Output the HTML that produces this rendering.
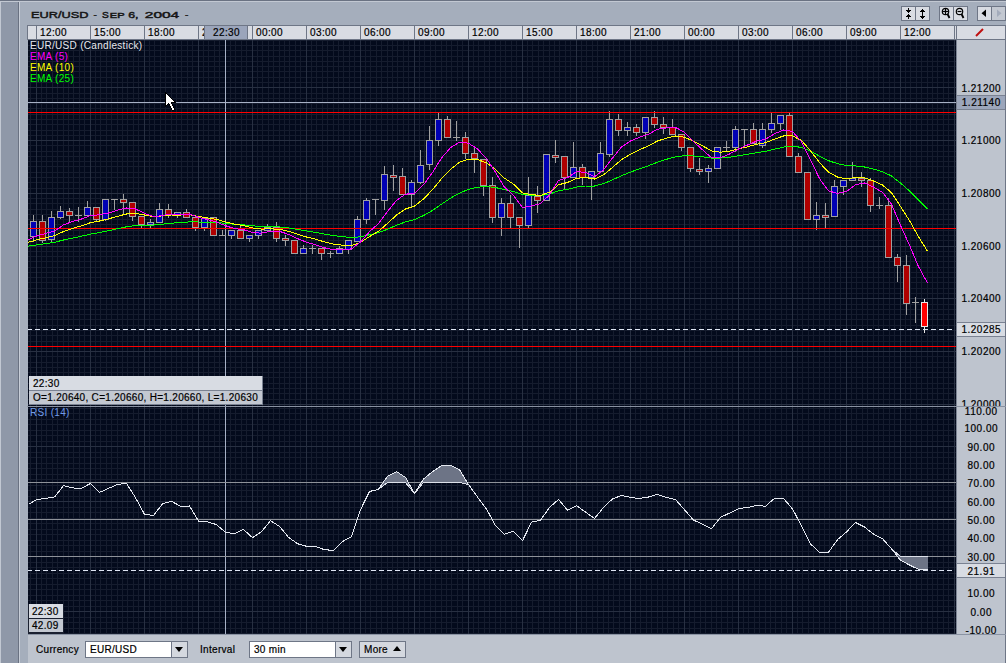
<!DOCTYPE html>
<html><head><meta charset="utf-8">
<style>
html,body{margin:0;padding:0;}
body{width:1006px;height:663px;overflow:hidden;position:relative;background:#a5aebc;font-family:"Liberation Sans",sans-serif;font-size:10px;color:#000;}
.a{position:absolute;}
body{-webkit-text-stroke:0.2px currentColor}
.t{position:absolute;white-space:nowrap;line-height:13px;letter-spacing:0.3px;font-size:10px}
.hc{position:absolute;top:26px;height:13px;background:#d9dce3;}
.ax{position:absolute;left:957px;width:48px;text-align:center;line-height:13px;white-space:nowrap;letter-spacing:0.5px;text-indent:0.5px;font-size:10px}
</style></head><body>
<!-- left strip -->
<div class="a" style="left:0;top:0;width:1px;height:663px;background:#c2c8d2"></div>
<div class="a" style="left:1px;top:0;width:17px;height:663px;background:#8f98a8"></div>
<div class="a" style="left:18px;top:0;width:1px;height:663px;background:#6a7282"></div>
<div class="a" style="left:19px;top:0;width:1px;height:663px;background:#c8ced8"></div>
<div class="a" style="left:0;top:0;width:1006px;height:1px;background:#6a7282"></div>
<div class="a" style="left:0;top:1px;width:1006px;height:1px;background:#c2c8d2"></div>

<!-- title -->
<svg class="a" style="left:0;top:0" width="300" height="24"><g font-family="Liberation Sans" font-weight="normal" fill="#161616" stroke="#161616" stroke-width="0.45" style="-webkit-text-stroke:0"><text x="31" y="18.3" font-size="9.2" textLength="57.5" lengthAdjust="spacingAndGlyphs">EUR/USD</text><text x="93.5" y="18.3" font-size="9.2" textLength="3.3" lengthAdjust="spacingAndGlyphs">-</text><text x="102" y="18.3" font-size="9.2" textLength="6.8" lengthAdjust="spacingAndGlyphs">S</text><text x="109.8" y="18.3" font-size="7.2" textLength="14.8" lengthAdjust="spacingAndGlyphs">EP</text><text x="128.2" y="18.3" font-size="9.2" textLength="10.3" lengthAdjust="spacingAndGlyphs">6,</text><text x="144.8" y="18.3" font-size="9.2" textLength="34.4" lengthAdjust="spacingAndGlyphs">2004</text><text x="185" y="18.3" font-size="9.2" textLength="3.3" lengthAdjust="spacingAndGlyphs">-</text></g></svg>

<!-- title buttons -->
<div class="a" style="left:901px;top:6px;width:29px;height:15px;background:#6e7686"></div>
<div class="a" style="left:902px;top:7px;width:13px;height:13px;background:#d9dce3"></div>
<div class="a" style="left:916px;top:7px;width:13px;height:13px;background:#d9dce3"></div>
<div class="a" style="left:939px;top:6px;width:29px;height:15px;background:#6e7686"></div>
<div class="a" style="left:940px;top:7px;width:13px;height:13px;background:#d9dce3"></div>
<div class="a" style="left:954px;top:7px;width:13px;height:13px;background:#d9dce3"></div>
<div class="a" style="left:977px;top:6px;width:29px;height:15px;background:#6e7686"></div>
<div class="a" style="left:978px;top:7px;width:13px;height:13px;background:#d9dce3"></div>
<div class="a" style="left:992px;top:7px;width:13px;height:13px;background:#c3c8d1"></div>

<!-- time header -->
<div class="a" style="left:27px;top:25px;width:979px;height:15px;background:#6e7686"></div>
<div class="hc" style="left:28px;width:8px"></div>
<div class="hc" style="left:37px;width:53px"></div>
<div class="t" style="left:40px;top:26px;letter-spacing:0.4px">12:00</div>
<div class="hc" style="left:91px;width:53px"></div>
<div class="t" style="left:94px;top:26px;letter-spacing:0.4px">15:00</div>
<div class="hc" style="left:145px;width:53px"></div>
<div class="t" style="left:148px;top:26px;letter-spacing:0.4px">18:00</div>
<div class="hc" style="left:199px;width:53px"></div>
<div class="t" style="left:202px;top:26px;letter-spacing:0.4px">21:00</div>
<div class="hc" style="left:253px;width:53px"></div>
<div class="t" style="left:256px;top:26px;letter-spacing:0.4px">00:00</div>
<div class="hc" style="left:307px;width:53px"></div>
<div class="t" style="left:310px;top:26px;letter-spacing:0.4px">03:00</div>
<div class="hc" style="left:361px;width:53px"></div>
<div class="t" style="left:364px;top:26px;letter-spacing:0.4px">06:00</div>
<div class="hc" style="left:415px;width:53px"></div>
<div class="t" style="left:418px;top:26px;letter-spacing:0.4px">09:00</div>
<div class="hc" style="left:469px;width:53px"></div>
<div class="t" style="left:472px;top:26px;letter-spacing:0.4px">12:00</div>
<div class="hc" style="left:523px;width:53px"></div>
<div class="t" style="left:526px;top:26px;letter-spacing:0.4px">15:00</div>
<div class="hc" style="left:577px;width:53px"></div>
<div class="t" style="left:580px;top:26px;letter-spacing:0.4px">18:00</div>
<div class="hc" style="left:631px;width:53px"></div>
<div class="t" style="left:634px;top:26px;letter-spacing:0.4px">21:00</div>
<div class="hc" style="left:685px;width:53px"></div>
<div class="t" style="left:688px;top:26px;letter-spacing:0.4px">00:00</div>
<div class="hc" style="left:739px;width:53px"></div>
<div class="t" style="left:742px;top:26px;letter-spacing:0.4px">03:00</div>
<div class="hc" style="left:793px;width:53px"></div>
<div class="t" style="left:796px;top:26px;letter-spacing:0.4px">06:00</div>
<div class="hc" style="left:847px;width:53px"></div>
<div class="t" style="left:850px;top:26px;letter-spacing:0.4px">09:00</div>
<div class="hc" style="left:901px;width:53px"></div>
<div class="t" style="left:904px;top:26px;letter-spacing:0.4px">12:00</div>
<div class="a" style="left:955px;top:26px;width:1px;height:13px;background:#d9dce3"></div>
<div class="a" style="left:204px;top:26px;width:44px;height:13px;background:#6e7686"></div>
<div class="a" style="left:205px;top:26px;width:42px;height:13px;background:#9ba5bb"></div>
<div class="t" style="left:213px;top:26px;letter-spacing:0.4px">22:30</div>
<div class="hc" style="left:957px;width:48px"></div>

<!-- price axis -->
<div class="a" style="left:956px;top:40px;width:1px;height:594px;background:#7c8494"></div>
<div class="a" style="left:957px;top:40px;width:48px;height:594px;background:#bec4ce"></div>
<div class="a" style="left:1005px;top:25px;width:1px;height:638px;background:#6e7686"></div>

<!-- bottom toolbar -->
<div class="a" style="left:27px;top:634px;width:979px;height:1px;background:#8a93a3"></div>
<div class="a" style="left:28px;top:635px;width:977px;height:28px;background:#bec4ce"></div>
<div class="a" style="left:27px;top:40px;width:1px;height:623px;background:#a5aebc"></div>

<svg class="a" style="left:0;top:0" width="1006" height="663" shape-rendering="crispEdges">
<defs><clipPath id="cliptop"><rect x="28" y="40" width="928" height="366"/></clipPath></defs>
<rect x="28" y="40" width="928" height="366" fill="#030a1c"/>
<rect x="28" y="407" width="928" height="227" fill="#030a1c"/>
<rect x="28" y="405" width="928" height="1" fill="#030a1c"/>
<rect x="30" y="40" width="1" height="366" fill="#151c2e"/>
<rect x="36" y="40" width="1" height="366" fill="#283042"/>
<rect x="41" y="40" width="1" height="366" fill="#151c2e"/>
<rect x="46" y="40" width="1" height="366" fill="#151c2e"/>
<rect x="52" y="40" width="1" height="366" fill="#151c2e"/>
<rect x="57" y="40" width="1" height="366" fill="#151c2e"/>
<rect x="63" y="40" width="1" height="366" fill="#151c2e"/>
<rect x="68" y="40" width="1" height="366" fill="#151c2e"/>
<rect x="73" y="40" width="1" height="366" fill="#151c2e"/>
<rect x="79" y="40" width="1" height="366" fill="#151c2e"/>
<rect x="84" y="40" width="1" height="366" fill="#151c2e"/>
<rect x="90" y="40" width="1" height="366" fill="#283042"/>
<rect x="95" y="40" width="1" height="366" fill="#151c2e"/>
<rect x="100" y="40" width="1" height="366" fill="#151c2e"/>
<rect x="106" y="40" width="1" height="366" fill="#151c2e"/>
<rect x="111" y="40" width="1" height="366" fill="#151c2e"/>
<rect x="117" y="40" width="1" height="366" fill="#151c2e"/>
<rect x="122" y="40" width="1" height="366" fill="#151c2e"/>
<rect x="127" y="40" width="1" height="366" fill="#151c2e"/>
<rect x="133" y="40" width="1" height="366" fill="#151c2e"/>
<rect x="138" y="40" width="1" height="366" fill="#151c2e"/>
<rect x="144" y="40" width="1" height="366" fill="#283042"/>
<rect x="149" y="40" width="1" height="366" fill="#151c2e"/>
<rect x="154" y="40" width="1" height="366" fill="#151c2e"/>
<rect x="160" y="40" width="1" height="366" fill="#151c2e"/>
<rect x="165" y="40" width="1" height="366" fill="#151c2e"/>
<rect x="171" y="40" width="1" height="366" fill="#151c2e"/>
<rect x="176" y="40" width="1" height="366" fill="#151c2e"/>
<rect x="181" y="40" width="1" height="366" fill="#151c2e"/>
<rect x="187" y="40" width="1" height="366" fill="#151c2e"/>
<rect x="192" y="40" width="1" height="366" fill="#151c2e"/>
<rect x="198" y="40" width="1" height="366" fill="#283042"/>
<rect x="203" y="40" width="1" height="366" fill="#151c2e"/>
<rect x="208" y="40" width="1" height="366" fill="#151c2e"/>
<rect x="214" y="40" width="1" height="366" fill="#151c2e"/>
<rect x="219" y="40" width="1" height="366" fill="#151c2e"/>
<rect x="225" y="40" width="1" height="366" fill="#151c2e"/>
<rect x="230" y="40" width="1" height="366" fill="#151c2e"/>
<rect x="235" y="40" width="1" height="366" fill="#151c2e"/>
<rect x="241" y="40" width="1" height="366" fill="#151c2e"/>
<rect x="246" y="40" width="1" height="366" fill="#151c2e"/>
<rect x="252" y="40" width="1" height="366" fill="#283042"/>
<rect x="257" y="40" width="1" height="366" fill="#151c2e"/>
<rect x="262" y="40" width="1" height="366" fill="#151c2e"/>
<rect x="268" y="40" width="1" height="366" fill="#151c2e"/>
<rect x="273" y="40" width="1" height="366" fill="#151c2e"/>
<rect x="279" y="40" width="1" height="366" fill="#151c2e"/>
<rect x="284" y="40" width="1" height="366" fill="#151c2e"/>
<rect x="289" y="40" width="1" height="366" fill="#151c2e"/>
<rect x="295" y="40" width="1" height="366" fill="#151c2e"/>
<rect x="300" y="40" width="1" height="366" fill="#151c2e"/>
<rect x="306" y="40" width="1" height="366" fill="#283042"/>
<rect x="311" y="40" width="1" height="366" fill="#151c2e"/>
<rect x="316" y="40" width="1" height="366" fill="#151c2e"/>
<rect x="322" y="40" width="1" height="366" fill="#151c2e"/>
<rect x="327" y="40" width="1" height="366" fill="#151c2e"/>
<rect x="333" y="40" width="1" height="366" fill="#151c2e"/>
<rect x="338" y="40" width="1" height="366" fill="#151c2e"/>
<rect x="343" y="40" width="1" height="366" fill="#151c2e"/>
<rect x="349" y="40" width="1" height="366" fill="#151c2e"/>
<rect x="354" y="40" width="1" height="366" fill="#151c2e"/>
<rect x="360" y="40" width="1" height="366" fill="#283042"/>
<rect x="365" y="40" width="1" height="366" fill="#151c2e"/>
<rect x="370" y="40" width="1" height="366" fill="#151c2e"/>
<rect x="376" y="40" width="1" height="366" fill="#151c2e"/>
<rect x="381" y="40" width="1" height="366" fill="#151c2e"/>
<rect x="387" y="40" width="1" height="366" fill="#151c2e"/>
<rect x="392" y="40" width="1" height="366" fill="#151c2e"/>
<rect x="397" y="40" width="1" height="366" fill="#151c2e"/>
<rect x="403" y="40" width="1" height="366" fill="#151c2e"/>
<rect x="408" y="40" width="1" height="366" fill="#151c2e"/>
<rect x="414" y="40" width="1" height="366" fill="#283042"/>
<rect x="419" y="40" width="1" height="366" fill="#151c2e"/>
<rect x="424" y="40" width="1" height="366" fill="#151c2e"/>
<rect x="430" y="40" width="1" height="366" fill="#151c2e"/>
<rect x="435" y="40" width="1" height="366" fill="#151c2e"/>
<rect x="441" y="40" width="1" height="366" fill="#151c2e"/>
<rect x="446" y="40" width="1" height="366" fill="#151c2e"/>
<rect x="451" y="40" width="1" height="366" fill="#151c2e"/>
<rect x="457" y="40" width="1" height="366" fill="#151c2e"/>
<rect x="462" y="40" width="1" height="366" fill="#151c2e"/>
<rect x="468" y="40" width="1" height="366" fill="#283042"/>
<rect x="473" y="40" width="1" height="366" fill="#151c2e"/>
<rect x="478" y="40" width="1" height="366" fill="#151c2e"/>
<rect x="484" y="40" width="1" height="366" fill="#151c2e"/>
<rect x="489" y="40" width="1" height="366" fill="#151c2e"/>
<rect x="495" y="40" width="1" height="366" fill="#151c2e"/>
<rect x="500" y="40" width="1" height="366" fill="#151c2e"/>
<rect x="505" y="40" width="1" height="366" fill="#151c2e"/>
<rect x="511" y="40" width="1" height="366" fill="#151c2e"/>
<rect x="516" y="40" width="1" height="366" fill="#151c2e"/>
<rect x="522" y="40" width="1" height="366" fill="#283042"/>
<rect x="527" y="40" width="1" height="366" fill="#151c2e"/>
<rect x="532" y="40" width="1" height="366" fill="#151c2e"/>
<rect x="538" y="40" width="1" height="366" fill="#151c2e"/>
<rect x="543" y="40" width="1" height="366" fill="#151c2e"/>
<rect x="549" y="40" width="1" height="366" fill="#151c2e"/>
<rect x="554" y="40" width="1" height="366" fill="#151c2e"/>
<rect x="559" y="40" width="1" height="366" fill="#151c2e"/>
<rect x="565" y="40" width="1" height="366" fill="#151c2e"/>
<rect x="570" y="40" width="1" height="366" fill="#151c2e"/>
<rect x="576" y="40" width="1" height="366" fill="#283042"/>
<rect x="581" y="40" width="1" height="366" fill="#151c2e"/>
<rect x="586" y="40" width="1" height="366" fill="#151c2e"/>
<rect x="592" y="40" width="1" height="366" fill="#151c2e"/>
<rect x="597" y="40" width="1" height="366" fill="#151c2e"/>
<rect x="603" y="40" width="1" height="366" fill="#151c2e"/>
<rect x="608" y="40" width="1" height="366" fill="#151c2e"/>
<rect x="613" y="40" width="1" height="366" fill="#151c2e"/>
<rect x="619" y="40" width="1" height="366" fill="#151c2e"/>
<rect x="624" y="40" width="1" height="366" fill="#151c2e"/>
<rect x="630" y="40" width="1" height="366" fill="#283042"/>
<rect x="635" y="40" width="1" height="366" fill="#151c2e"/>
<rect x="640" y="40" width="1" height="366" fill="#151c2e"/>
<rect x="646" y="40" width="1" height="366" fill="#151c2e"/>
<rect x="651" y="40" width="1" height="366" fill="#151c2e"/>
<rect x="657" y="40" width="1" height="366" fill="#151c2e"/>
<rect x="662" y="40" width="1" height="366" fill="#151c2e"/>
<rect x="667" y="40" width="1" height="366" fill="#151c2e"/>
<rect x="673" y="40" width="1" height="366" fill="#151c2e"/>
<rect x="678" y="40" width="1" height="366" fill="#151c2e"/>
<rect x="684" y="40" width="1" height="366" fill="#283042"/>
<rect x="689" y="40" width="1" height="366" fill="#151c2e"/>
<rect x="694" y="40" width="1" height="366" fill="#151c2e"/>
<rect x="700" y="40" width="1" height="366" fill="#151c2e"/>
<rect x="705" y="40" width="1" height="366" fill="#151c2e"/>
<rect x="711" y="40" width="1" height="366" fill="#151c2e"/>
<rect x="716" y="40" width="1" height="366" fill="#151c2e"/>
<rect x="721" y="40" width="1" height="366" fill="#151c2e"/>
<rect x="727" y="40" width="1" height="366" fill="#151c2e"/>
<rect x="732" y="40" width="1" height="366" fill="#151c2e"/>
<rect x="738" y="40" width="1" height="366" fill="#283042"/>
<rect x="743" y="40" width="1" height="366" fill="#151c2e"/>
<rect x="748" y="40" width="1" height="366" fill="#151c2e"/>
<rect x="754" y="40" width="1" height="366" fill="#151c2e"/>
<rect x="759" y="40" width="1" height="366" fill="#151c2e"/>
<rect x="765" y="40" width="1" height="366" fill="#151c2e"/>
<rect x="770" y="40" width="1" height="366" fill="#151c2e"/>
<rect x="775" y="40" width="1" height="366" fill="#151c2e"/>
<rect x="781" y="40" width="1" height="366" fill="#151c2e"/>
<rect x="786" y="40" width="1" height="366" fill="#151c2e"/>
<rect x="792" y="40" width="1" height="366" fill="#283042"/>
<rect x="797" y="40" width="1" height="366" fill="#151c2e"/>
<rect x="802" y="40" width="1" height="366" fill="#151c2e"/>
<rect x="808" y="40" width="1" height="366" fill="#151c2e"/>
<rect x="813" y="40" width="1" height="366" fill="#151c2e"/>
<rect x="819" y="40" width="1" height="366" fill="#151c2e"/>
<rect x="824" y="40" width="1" height="366" fill="#151c2e"/>
<rect x="829" y="40" width="1" height="366" fill="#151c2e"/>
<rect x="835" y="40" width="1" height="366" fill="#151c2e"/>
<rect x="840" y="40" width="1" height="366" fill="#151c2e"/>
<rect x="846" y="40" width="1" height="366" fill="#283042"/>
<rect x="851" y="40" width="1" height="366" fill="#151c2e"/>
<rect x="856" y="40" width="1" height="366" fill="#151c2e"/>
<rect x="862" y="40" width="1" height="366" fill="#151c2e"/>
<rect x="867" y="40" width="1" height="366" fill="#151c2e"/>
<rect x="873" y="40" width="1" height="366" fill="#151c2e"/>
<rect x="878" y="40" width="1" height="366" fill="#151c2e"/>
<rect x="883" y="40" width="1" height="366" fill="#151c2e"/>
<rect x="889" y="40" width="1" height="366" fill="#151c2e"/>
<rect x="894" y="40" width="1" height="366" fill="#151c2e"/>
<rect x="900" y="40" width="1" height="366" fill="#283042"/>
<rect x="905" y="40" width="1" height="366" fill="#151c2e"/>
<rect x="910" y="40" width="1" height="366" fill="#151c2e"/>
<rect x="916" y="40" width="1" height="366" fill="#151c2e"/>
<rect x="921" y="40" width="1" height="366" fill="#151c2e"/>
<rect x="927" y="40" width="1" height="366" fill="#151c2e"/>
<rect x="932" y="40" width="1" height="366" fill="#151c2e"/>
<rect x="937" y="40" width="1" height="366" fill="#151c2e"/>
<rect x="943" y="40" width="1" height="366" fill="#151c2e"/>
<rect x="948" y="40" width="1" height="366" fill="#151c2e"/>
<rect x="954" y="40" width="1" height="366" fill="#283042"/>
<rect x="28" y="40" width="928" height="1" fill="#151c2e"/>
<rect x="28" y="45" width="928" height="1" fill="#151c2e"/>
<rect x="28" y="50" width="928" height="1" fill="#151c2e"/>
<rect x="28" y="56" width="928" height="1" fill="#151c2e"/>
<rect x="28" y="61" width="928" height="1" fill="#151c2e"/>
<rect x="28" y="66" width="928" height="1" fill="#151c2e"/>
<rect x="28" y="71" width="928" height="1" fill="#151c2e"/>
<rect x="28" y="77" width="928" height="1" fill="#151c2e"/>
<rect x="28" y="82" width="928" height="1" fill="#151c2e"/>
<rect x="28" y="87" width="928" height="1" fill="#283042"/>
<rect x="28" y="93" width="928" height="1" fill="#151c2e"/>
<rect x="28" y="98" width="928" height="1" fill="#151c2e"/>
<rect x="28" y="103" width="928" height="1" fill="#151c2e"/>
<rect x="28" y="108" width="928" height="1" fill="#151c2e"/>
<rect x="28" y="114" width="928" height="1" fill="#151c2e"/>
<rect x="28" y="119" width="928" height="1" fill="#151c2e"/>
<rect x="28" y="124" width="928" height="1" fill="#151c2e"/>
<rect x="28" y="130" width="928" height="1" fill="#151c2e"/>
<rect x="28" y="135" width="928" height="1" fill="#151c2e"/>
<rect x="28" y="140" width="928" height="1" fill="#283042"/>
<rect x="28" y="145" width="928" height="1" fill="#151c2e"/>
<rect x="28" y="151" width="928" height="1" fill="#151c2e"/>
<rect x="28" y="156" width="928" height="1" fill="#151c2e"/>
<rect x="28" y="161" width="928" height="1" fill="#151c2e"/>
<rect x="28" y="166" width="928" height="1" fill="#151c2e"/>
<rect x="28" y="172" width="928" height="1" fill="#151c2e"/>
<rect x="28" y="177" width="928" height="1" fill="#151c2e"/>
<rect x="28" y="182" width="928" height="1" fill="#151c2e"/>
<rect x="28" y="188" width="928" height="1" fill="#151c2e"/>
<rect x="28" y="193" width="928" height="1" fill="#283042"/>
<rect x="28" y="198" width="928" height="1" fill="#151c2e"/>
<rect x="28" y="203" width="928" height="1" fill="#151c2e"/>
<rect x="28" y="209" width="928" height="1" fill="#151c2e"/>
<rect x="28" y="214" width="928" height="1" fill="#151c2e"/>
<rect x="28" y="219" width="928" height="1" fill="#151c2e"/>
<rect x="28" y="224" width="928" height="1" fill="#151c2e"/>
<rect x="28" y="230" width="928" height="1" fill="#151c2e"/>
<rect x="28" y="235" width="928" height="1" fill="#151c2e"/>
<rect x="28" y="240" width="928" height="1" fill="#151c2e"/>
<rect x="28" y="246" width="928" height="1" fill="#283042"/>
<rect x="28" y="251" width="928" height="1" fill="#151c2e"/>
<rect x="28" y="256" width="928" height="1" fill="#151c2e"/>
<rect x="28" y="261" width="928" height="1" fill="#151c2e"/>
<rect x="28" y="267" width="928" height="1" fill="#151c2e"/>
<rect x="28" y="272" width="928" height="1" fill="#151c2e"/>
<rect x="28" y="277" width="928" height="1" fill="#151c2e"/>
<rect x="28" y="282" width="928" height="1" fill="#151c2e"/>
<rect x="28" y="288" width="928" height="1" fill="#151c2e"/>
<rect x="28" y="293" width="928" height="1" fill="#151c2e"/>
<rect x="28" y="298" width="928" height="1" fill="#283042"/>
<rect x="28" y="304" width="928" height="1" fill="#151c2e"/>
<rect x="28" y="309" width="928" height="1" fill="#151c2e"/>
<rect x="28" y="314" width="928" height="1" fill="#151c2e"/>
<rect x="28" y="319" width="928" height="1" fill="#151c2e"/>
<rect x="28" y="325" width="928" height="1" fill="#151c2e"/>
<rect x="28" y="330" width="928" height="1" fill="#151c2e"/>
<rect x="28" y="335" width="928" height="1" fill="#151c2e"/>
<rect x="28" y="341" width="928" height="1" fill="#151c2e"/>
<rect x="28" y="346" width="928" height="1" fill="#151c2e"/>
<rect x="28" y="351" width="928" height="1" fill="#283042"/>
<rect x="28" y="356" width="928" height="1" fill="#151c2e"/>
<rect x="28" y="362" width="928" height="1" fill="#151c2e"/>
<rect x="28" y="367" width="928" height="1" fill="#151c2e"/>
<rect x="28" y="372" width="928" height="1" fill="#151c2e"/>
<rect x="28" y="377" width="928" height="1" fill="#151c2e"/>
<rect x="28" y="383" width="928" height="1" fill="#151c2e"/>
<rect x="28" y="388" width="928" height="1" fill="#151c2e"/>
<rect x="28" y="393" width="928" height="1" fill="#151c2e"/>
<rect x="28" y="399" width="928" height="1" fill="#151c2e"/>
<rect x="28" y="404" width="928" height="1" fill="#283042"/>
<rect x="36" y="40" width="1" height="366" fill="#283042"/>
<rect x="90" y="40" width="1" height="366" fill="#283042"/>
<rect x="144" y="40" width="1" height="366" fill="#283042"/>
<rect x="198" y="40" width="1" height="366" fill="#283042"/>
<rect x="252" y="40" width="1" height="366" fill="#283042"/>
<rect x="306" y="40" width="1" height="366" fill="#283042"/>
<rect x="360" y="40" width="1" height="366" fill="#283042"/>
<rect x="414" y="40" width="1" height="366" fill="#283042"/>
<rect x="468" y="40" width="1" height="366" fill="#283042"/>
<rect x="522" y="40" width="1" height="366" fill="#283042"/>
<rect x="576" y="40" width="1" height="366" fill="#283042"/>
<rect x="630" y="40" width="1" height="366" fill="#283042"/>
<rect x="684" y="40" width="1" height="366" fill="#283042"/>
<rect x="738" y="40" width="1" height="366" fill="#283042"/>
<rect x="792" y="40" width="1" height="366" fill="#283042"/>
<rect x="846" y="40" width="1" height="366" fill="#283042"/>
<rect x="900" y="40" width="1" height="366" fill="#283042"/>
<rect x="954" y="40" width="1" height="366" fill="#283042"/>
<rect x="30" y="407" width="1" height="227" fill="#151c2e"/>
<rect x="36" y="407" width="1" height="227" fill="#283042"/>
<rect x="41" y="407" width="1" height="227" fill="#151c2e"/>
<rect x="46" y="407" width="1" height="227" fill="#151c2e"/>
<rect x="52" y="407" width="1" height="227" fill="#151c2e"/>
<rect x="57" y="407" width="1" height="227" fill="#151c2e"/>
<rect x="63" y="407" width="1" height="227" fill="#151c2e"/>
<rect x="68" y="407" width="1" height="227" fill="#151c2e"/>
<rect x="73" y="407" width="1" height="227" fill="#151c2e"/>
<rect x="79" y="407" width="1" height="227" fill="#151c2e"/>
<rect x="84" y="407" width="1" height="227" fill="#151c2e"/>
<rect x="90" y="407" width="1" height="227" fill="#283042"/>
<rect x="95" y="407" width="1" height="227" fill="#151c2e"/>
<rect x="100" y="407" width="1" height="227" fill="#151c2e"/>
<rect x="106" y="407" width="1" height="227" fill="#151c2e"/>
<rect x="111" y="407" width="1" height="227" fill="#151c2e"/>
<rect x="117" y="407" width="1" height="227" fill="#151c2e"/>
<rect x="122" y="407" width="1" height="227" fill="#151c2e"/>
<rect x="127" y="407" width="1" height="227" fill="#151c2e"/>
<rect x="133" y="407" width="1" height="227" fill="#151c2e"/>
<rect x="138" y="407" width="1" height="227" fill="#151c2e"/>
<rect x="144" y="407" width="1" height="227" fill="#283042"/>
<rect x="149" y="407" width="1" height="227" fill="#151c2e"/>
<rect x="154" y="407" width="1" height="227" fill="#151c2e"/>
<rect x="160" y="407" width="1" height="227" fill="#151c2e"/>
<rect x="165" y="407" width="1" height="227" fill="#151c2e"/>
<rect x="171" y="407" width="1" height="227" fill="#151c2e"/>
<rect x="176" y="407" width="1" height="227" fill="#151c2e"/>
<rect x="181" y="407" width="1" height="227" fill="#151c2e"/>
<rect x="187" y="407" width="1" height="227" fill="#151c2e"/>
<rect x="192" y="407" width="1" height="227" fill="#151c2e"/>
<rect x="198" y="407" width="1" height="227" fill="#283042"/>
<rect x="203" y="407" width="1" height="227" fill="#151c2e"/>
<rect x="208" y="407" width="1" height="227" fill="#151c2e"/>
<rect x="214" y="407" width="1" height="227" fill="#151c2e"/>
<rect x="219" y="407" width="1" height="227" fill="#151c2e"/>
<rect x="225" y="407" width="1" height="227" fill="#151c2e"/>
<rect x="230" y="407" width="1" height="227" fill="#151c2e"/>
<rect x="235" y="407" width="1" height="227" fill="#151c2e"/>
<rect x="241" y="407" width="1" height="227" fill="#151c2e"/>
<rect x="246" y="407" width="1" height="227" fill="#151c2e"/>
<rect x="252" y="407" width="1" height="227" fill="#283042"/>
<rect x="257" y="407" width="1" height="227" fill="#151c2e"/>
<rect x="262" y="407" width="1" height="227" fill="#151c2e"/>
<rect x="268" y="407" width="1" height="227" fill="#151c2e"/>
<rect x="273" y="407" width="1" height="227" fill="#151c2e"/>
<rect x="279" y="407" width="1" height="227" fill="#151c2e"/>
<rect x="284" y="407" width="1" height="227" fill="#151c2e"/>
<rect x="289" y="407" width="1" height="227" fill="#151c2e"/>
<rect x="295" y="407" width="1" height="227" fill="#151c2e"/>
<rect x="300" y="407" width="1" height="227" fill="#151c2e"/>
<rect x="306" y="407" width="1" height="227" fill="#283042"/>
<rect x="311" y="407" width="1" height="227" fill="#151c2e"/>
<rect x="316" y="407" width="1" height="227" fill="#151c2e"/>
<rect x="322" y="407" width="1" height="227" fill="#151c2e"/>
<rect x="327" y="407" width="1" height="227" fill="#151c2e"/>
<rect x="333" y="407" width="1" height="227" fill="#151c2e"/>
<rect x="338" y="407" width="1" height="227" fill="#151c2e"/>
<rect x="343" y="407" width="1" height="227" fill="#151c2e"/>
<rect x="349" y="407" width="1" height="227" fill="#151c2e"/>
<rect x="354" y="407" width="1" height="227" fill="#151c2e"/>
<rect x="360" y="407" width="1" height="227" fill="#283042"/>
<rect x="365" y="407" width="1" height="227" fill="#151c2e"/>
<rect x="370" y="407" width="1" height="227" fill="#151c2e"/>
<rect x="376" y="407" width="1" height="227" fill="#151c2e"/>
<rect x="381" y="407" width="1" height="227" fill="#151c2e"/>
<rect x="387" y="407" width="1" height="227" fill="#151c2e"/>
<rect x="392" y="407" width="1" height="227" fill="#151c2e"/>
<rect x="397" y="407" width="1" height="227" fill="#151c2e"/>
<rect x="403" y="407" width="1" height="227" fill="#151c2e"/>
<rect x="408" y="407" width="1" height="227" fill="#151c2e"/>
<rect x="414" y="407" width="1" height="227" fill="#283042"/>
<rect x="419" y="407" width="1" height="227" fill="#151c2e"/>
<rect x="424" y="407" width="1" height="227" fill="#151c2e"/>
<rect x="430" y="407" width="1" height="227" fill="#151c2e"/>
<rect x="435" y="407" width="1" height="227" fill="#151c2e"/>
<rect x="441" y="407" width="1" height="227" fill="#151c2e"/>
<rect x="446" y="407" width="1" height="227" fill="#151c2e"/>
<rect x="451" y="407" width="1" height="227" fill="#151c2e"/>
<rect x="457" y="407" width="1" height="227" fill="#151c2e"/>
<rect x="462" y="407" width="1" height="227" fill="#151c2e"/>
<rect x="468" y="407" width="1" height="227" fill="#283042"/>
<rect x="473" y="407" width="1" height="227" fill="#151c2e"/>
<rect x="478" y="407" width="1" height="227" fill="#151c2e"/>
<rect x="484" y="407" width="1" height="227" fill="#151c2e"/>
<rect x="489" y="407" width="1" height="227" fill="#151c2e"/>
<rect x="495" y="407" width="1" height="227" fill="#151c2e"/>
<rect x="500" y="407" width="1" height="227" fill="#151c2e"/>
<rect x="505" y="407" width="1" height="227" fill="#151c2e"/>
<rect x="511" y="407" width="1" height="227" fill="#151c2e"/>
<rect x="516" y="407" width="1" height="227" fill="#151c2e"/>
<rect x="522" y="407" width="1" height="227" fill="#283042"/>
<rect x="527" y="407" width="1" height="227" fill="#151c2e"/>
<rect x="532" y="407" width="1" height="227" fill="#151c2e"/>
<rect x="538" y="407" width="1" height="227" fill="#151c2e"/>
<rect x="543" y="407" width="1" height="227" fill="#151c2e"/>
<rect x="549" y="407" width="1" height="227" fill="#151c2e"/>
<rect x="554" y="407" width="1" height="227" fill="#151c2e"/>
<rect x="559" y="407" width="1" height="227" fill="#151c2e"/>
<rect x="565" y="407" width="1" height="227" fill="#151c2e"/>
<rect x="570" y="407" width="1" height="227" fill="#151c2e"/>
<rect x="576" y="407" width="1" height="227" fill="#283042"/>
<rect x="581" y="407" width="1" height="227" fill="#151c2e"/>
<rect x="586" y="407" width="1" height="227" fill="#151c2e"/>
<rect x="592" y="407" width="1" height="227" fill="#151c2e"/>
<rect x="597" y="407" width="1" height="227" fill="#151c2e"/>
<rect x="603" y="407" width="1" height="227" fill="#151c2e"/>
<rect x="608" y="407" width="1" height="227" fill="#151c2e"/>
<rect x="613" y="407" width="1" height="227" fill="#151c2e"/>
<rect x="619" y="407" width="1" height="227" fill="#151c2e"/>
<rect x="624" y="407" width="1" height="227" fill="#151c2e"/>
<rect x="630" y="407" width="1" height="227" fill="#283042"/>
<rect x="635" y="407" width="1" height="227" fill="#151c2e"/>
<rect x="640" y="407" width="1" height="227" fill="#151c2e"/>
<rect x="646" y="407" width="1" height="227" fill="#151c2e"/>
<rect x="651" y="407" width="1" height="227" fill="#151c2e"/>
<rect x="657" y="407" width="1" height="227" fill="#151c2e"/>
<rect x="662" y="407" width="1" height="227" fill="#151c2e"/>
<rect x="667" y="407" width="1" height="227" fill="#151c2e"/>
<rect x="673" y="407" width="1" height="227" fill="#151c2e"/>
<rect x="678" y="407" width="1" height="227" fill="#151c2e"/>
<rect x="684" y="407" width="1" height="227" fill="#283042"/>
<rect x="689" y="407" width="1" height="227" fill="#151c2e"/>
<rect x="694" y="407" width="1" height="227" fill="#151c2e"/>
<rect x="700" y="407" width="1" height="227" fill="#151c2e"/>
<rect x="705" y="407" width="1" height="227" fill="#151c2e"/>
<rect x="711" y="407" width="1" height="227" fill="#151c2e"/>
<rect x="716" y="407" width="1" height="227" fill="#151c2e"/>
<rect x="721" y="407" width="1" height="227" fill="#151c2e"/>
<rect x="727" y="407" width="1" height="227" fill="#151c2e"/>
<rect x="732" y="407" width="1" height="227" fill="#151c2e"/>
<rect x="738" y="407" width="1" height="227" fill="#283042"/>
<rect x="743" y="407" width="1" height="227" fill="#151c2e"/>
<rect x="748" y="407" width="1" height="227" fill="#151c2e"/>
<rect x="754" y="407" width="1" height="227" fill="#151c2e"/>
<rect x="759" y="407" width="1" height="227" fill="#151c2e"/>
<rect x="765" y="407" width="1" height="227" fill="#151c2e"/>
<rect x="770" y="407" width="1" height="227" fill="#151c2e"/>
<rect x="775" y="407" width="1" height="227" fill="#151c2e"/>
<rect x="781" y="407" width="1" height="227" fill="#151c2e"/>
<rect x="786" y="407" width="1" height="227" fill="#151c2e"/>
<rect x="792" y="407" width="1" height="227" fill="#283042"/>
<rect x="797" y="407" width="1" height="227" fill="#151c2e"/>
<rect x="802" y="407" width="1" height="227" fill="#151c2e"/>
<rect x="808" y="407" width="1" height="227" fill="#151c2e"/>
<rect x="813" y="407" width="1" height="227" fill="#151c2e"/>
<rect x="819" y="407" width="1" height="227" fill="#151c2e"/>
<rect x="824" y="407" width="1" height="227" fill="#151c2e"/>
<rect x="829" y="407" width="1" height="227" fill="#151c2e"/>
<rect x="835" y="407" width="1" height="227" fill="#151c2e"/>
<rect x="840" y="407" width="1" height="227" fill="#151c2e"/>
<rect x="846" y="407" width="1" height="227" fill="#283042"/>
<rect x="851" y="407" width="1" height="227" fill="#151c2e"/>
<rect x="856" y="407" width="1" height="227" fill="#151c2e"/>
<rect x="862" y="407" width="1" height="227" fill="#151c2e"/>
<rect x="867" y="407" width="1" height="227" fill="#151c2e"/>
<rect x="873" y="407" width="1" height="227" fill="#151c2e"/>
<rect x="878" y="407" width="1" height="227" fill="#151c2e"/>
<rect x="883" y="407" width="1" height="227" fill="#151c2e"/>
<rect x="889" y="407" width="1" height="227" fill="#151c2e"/>
<rect x="894" y="407" width="1" height="227" fill="#151c2e"/>
<rect x="900" y="407" width="1" height="227" fill="#283042"/>
<rect x="905" y="407" width="1" height="227" fill="#151c2e"/>
<rect x="910" y="407" width="1" height="227" fill="#151c2e"/>
<rect x="916" y="407" width="1" height="227" fill="#151c2e"/>
<rect x="921" y="407" width="1" height="227" fill="#151c2e"/>
<rect x="927" y="407" width="1" height="227" fill="#151c2e"/>
<rect x="932" y="407" width="1" height="227" fill="#151c2e"/>
<rect x="937" y="407" width="1" height="227" fill="#151c2e"/>
<rect x="943" y="407" width="1" height="227" fill="#151c2e"/>
<rect x="948" y="407" width="1" height="227" fill="#151c2e"/>
<rect x="954" y="407" width="1" height="227" fill="#283042"/>
<rect x="28" y="408" width="928" height="1" fill="#151c2e"/>
<rect x="28" y="413" width="928" height="1" fill="#151c2e"/>
<rect x="28" y="419" width="928" height="1" fill="#151c2e"/>
<rect x="28" y="424" width="928" height="1" fill="#151c2e"/>
<rect x="28" y="430" width="928" height="1" fill="#151c2e"/>
<rect x="28" y="435" width="928" height="1" fill="#151c2e"/>
<rect x="28" y="441" width="928" height="1" fill="#151c2e"/>
<rect x="28" y="446" width="928" height="1" fill="#283042"/>
<rect x="28" y="452" width="928" height="1" fill="#151c2e"/>
<rect x="28" y="457" width="928" height="1" fill="#151c2e"/>
<rect x="28" y="463" width="928" height="1" fill="#151c2e"/>
<rect x="28" y="468" width="928" height="1" fill="#151c2e"/>
<rect x="28" y="474" width="928" height="1" fill="#151c2e"/>
<rect x="28" y="479" width="928" height="1" fill="#151c2e"/>
<rect x="28" y="485" width="928" height="1" fill="#151c2e"/>
<rect x="28" y="490" width="928" height="1" fill="#151c2e"/>
<rect x="28" y="496" width="928" height="1" fill="#151c2e"/>
<rect x="28" y="501" width="928" height="1" fill="#283042"/>
<rect x="28" y="507" width="928" height="1" fill="#151c2e"/>
<rect x="28" y="512" width="928" height="1" fill="#151c2e"/>
<rect x="28" y="518" width="928" height="1" fill="#151c2e"/>
<rect x="28" y="523" width="928" height="1" fill="#151c2e"/>
<rect x="28" y="529" width="928" height="1" fill="#151c2e"/>
<rect x="28" y="534" width="928" height="1" fill="#151c2e"/>
<rect x="28" y="540" width="928" height="1" fill="#151c2e"/>
<rect x="28" y="545" width="928" height="1" fill="#151c2e"/>
<rect x="28" y="551" width="928" height="1" fill="#151c2e"/>
<rect x="28" y="556" width="928" height="1" fill="#283042"/>
<rect x="28" y="562" width="928" height="1" fill="#151c2e"/>
<rect x="28" y="567" width="928" height="1" fill="#151c2e"/>
<rect x="28" y="573" width="928" height="1" fill="#151c2e"/>
<rect x="28" y="578" width="928" height="1" fill="#151c2e"/>
<rect x="28" y="584" width="928" height="1" fill="#151c2e"/>
<rect x="28" y="589" width="928" height="1" fill="#151c2e"/>
<rect x="28" y="595" width="928" height="1" fill="#151c2e"/>
<rect x="28" y="600" width="928" height="1" fill="#151c2e"/>
<rect x="28" y="606" width="928" height="1" fill="#151c2e"/>
<rect x="28" y="611" width="928" height="1" fill="#283042"/>
<rect x="28" y="617" width="928" height="1" fill="#151c2e"/>
<rect x="28" y="622" width="928" height="1" fill="#151c2e"/>
<rect x="28" y="628" width="928" height="1" fill="#151c2e"/>
<rect x="28" y="633" width="928" height="1" fill="#151c2e"/>
<rect x="36" y="407" width="1" height="227" fill="#283042"/>
<rect x="90" y="407" width="1" height="227" fill="#283042"/>
<rect x="144" y="407" width="1" height="227" fill="#283042"/>
<rect x="198" y="407" width="1" height="227" fill="#283042"/>
<rect x="252" y="407" width="1" height="227" fill="#283042"/>
<rect x="306" y="407" width="1" height="227" fill="#283042"/>
<rect x="360" y="407" width="1" height="227" fill="#283042"/>
<rect x="414" y="407" width="1" height="227" fill="#283042"/>
<rect x="468" y="407" width="1" height="227" fill="#283042"/>
<rect x="522" y="407" width="1" height="227" fill="#283042"/>
<rect x="576" y="407" width="1" height="227" fill="#283042"/>
<rect x="630" y="407" width="1" height="227" fill="#283042"/>
<rect x="684" y="407" width="1" height="227" fill="#283042"/>
<rect x="738" y="407" width="1" height="227" fill="#283042"/>
<rect x="792" y="407" width="1" height="227" fill="#283042"/>
<rect x="846" y="407" width="1" height="227" fill="#283042"/>
<rect x="900" y="407" width="1" height="227" fill="#283042"/>
<rect x="954" y="407" width="1" height="227" fill="#283042"/>
<rect x="225" y="40" width="1" height="594" fill="#a7b1c6"/>
<rect x="28" y="102" width="928" height="1" fill="#a7b1c6"/>
<rect x="33" y="215" width="1" height="27" fill="#a0a0a0"/>
<rect x="30" y="221" width="7" height="16" fill="#a0a0a0"/>
<rect x="31" y="222" width="5" height="14" fill="#0000b4"/>
<rect x="42" y="215" width="1" height="28" fill="#a0a0a0"/>
<rect x="39" y="221" width="7" height="20" fill="#a0a0a0"/>
<rect x="40" y="222" width="5" height="18" fill="#b00000"/>
<rect x="51" y="211" width="1" height="32" fill="#a0a0a0"/>
<rect x="48" y="217" width="7" height="23" fill="#a0a0a0"/>
<rect x="49" y="218" width="5" height="21" fill="#0000b4"/>
<rect x="60" y="206" width="1" height="13" fill="#a0a0a0"/>
<rect x="57" y="211" width="7" height="7" fill="#a0a0a0"/>
<rect x="58" y="212" width="5" height="5" fill="#0000b4"/>
<rect x="69" y="208" width="1" height="14" fill="#a0a0a0"/>
<rect x="66" y="211" width="7" height="5" fill="#a0a0a0"/>
<rect x="67" y="212" width="5" height="3" fill="#b00000"/>
<rect x="78" y="207" width="1" height="15" fill="#a0a0a0"/>
<rect x="75" y="215" width="7" height="1" fill="#a0a0a0"/>
<rect x="87" y="201" width="1" height="15" fill="#a0a0a0"/>
<rect x="84" y="207" width="7" height="9" fill="#a0a0a0"/>
<rect x="85" y="208" width="5" height="7" fill="#0000b4"/>
<rect x="96" y="207" width="1" height="14" fill="#a0a0a0"/>
<rect x="93" y="207" width="7" height="13" fill="#a0a0a0"/>
<rect x="94" y="208" width="5" height="11" fill="#b00000"/>
<rect x="105" y="199" width="1" height="22" fill="#a0a0a0"/>
<rect x="102" y="199" width="7" height="21" fill="#a0a0a0"/>
<rect x="103" y="200" width="5" height="19" fill="#0000b4"/>
<rect x="114" y="199" width="1" height="11" fill="#a0a0a0"/>
<rect x="111" y="199" width="7" height="1" fill="#a0a0a0"/>
<rect x="123" y="194" width="1" height="20" fill="#a0a0a0"/>
<rect x="120" y="199" width="7" height="4" fill="#a0a0a0"/>
<rect x="121" y="200" width="5" height="2" fill="#b00000"/>
<rect x="132" y="202" width="1" height="19" fill="#a0a0a0"/>
<rect x="129" y="202" width="7" height="15" fill="#a0a0a0"/>
<rect x="130" y="203" width="5" height="13" fill="#b00000"/>
<rect x="141" y="216" width="1" height="13" fill="#a0a0a0"/>
<rect x="138" y="216" width="7" height="9" fill="#a0a0a0"/>
<rect x="139" y="217" width="5" height="7" fill="#b00000"/>
<rect x="150" y="219" width="1" height="10" fill="#a0a0a0"/>
<rect x="147" y="222" width="7" height="3" fill="#a0a0a0"/>
<rect x="148" y="223" width="5" height="1" fill="#0000b4"/>
<rect x="159" y="203" width="1" height="20" fill="#a0a0a0"/>
<rect x="156" y="209" width="7" height="14" fill="#a0a0a0"/>
<rect x="157" y="210" width="5" height="12" fill="#0000b4"/>
<rect x="168" y="204" width="1" height="14" fill="#a0a0a0"/>
<rect x="165" y="209" width="7" height="6" fill="#a0a0a0"/>
<rect x="166" y="210" width="5" height="4" fill="#b00000"/>
<rect x="177" y="212" width="1" height="6" fill="#a0a0a0"/>
<rect x="174" y="212" width="7" height="3" fill="#a0a0a0"/>
<rect x="175" y="213" width="5" height="1" fill="#0000b4"/>
<rect x="186" y="209" width="1" height="9" fill="#a0a0a0"/>
<rect x="183" y="212" width="7" height="6" fill="#a0a0a0"/>
<rect x="184" y="213" width="5" height="4" fill="#b00000"/>
<rect x="195" y="217" width="1" height="14" fill="#a0a0a0"/>
<rect x="192" y="217" width="7" height="11" fill="#a0a0a0"/>
<rect x="193" y="218" width="5" height="9" fill="#b00000"/>
<rect x="204" y="218" width="1" height="13" fill="#a0a0a0"/>
<rect x="201" y="218" width="7" height="10" fill="#a0a0a0"/>
<rect x="202" y="219" width="5" height="8" fill="#0000b4"/>
<rect x="213" y="217" width="1" height="19" fill="#a0a0a0"/>
<rect x="210" y="217" width="7" height="19" fill="#a0a0a0"/>
<rect x="211" y="218" width="5" height="17" fill="#b00000"/>
<rect x="222" y="230" width="1" height="6" fill="#a0a0a0"/>
<rect x="219" y="235" width="7" height="1" fill="#a0a0a0"/>
<rect x="231" y="230" width="1" height="9" fill="#a0a0a0"/>
<rect x="228" y="230" width="7" height="6" fill="#a0a0a0"/>
<rect x="229" y="231" width="5" height="4" fill="#0000b4"/>
<rect x="240" y="225" width="1" height="14" fill="#a0a0a0"/>
<rect x="237" y="230" width="7" height="9" fill="#a0a0a0"/>
<rect x="238" y="231" width="5" height="7" fill="#b00000"/>
<rect x="249" y="235" width="1" height="7" fill="#a0a0a0"/>
<rect x="246" y="235" width="7" height="4" fill="#a0a0a0"/>
<rect x="247" y="236" width="5" height="2" fill="#0000b4"/>
<rect x="258" y="230" width="1" height="9" fill="#a0a0a0"/>
<rect x="255" y="230" width="7" height="6" fill="#a0a0a0"/>
<rect x="256" y="231" width="5" height="4" fill="#0000b4"/>
<rect x="267" y="224" width="1" height="7" fill="#a0a0a0"/>
<rect x="264" y="227" width="7" height="4" fill="#a0a0a0"/>
<rect x="265" y="228" width="5" height="2" fill="#0000b4"/>
<rect x="276" y="222" width="1" height="20" fill="#a0a0a0"/>
<rect x="273" y="227" width="7" height="12" fill="#a0a0a0"/>
<rect x="274" y="228" width="5" height="10" fill="#b00000"/>
<rect x="285" y="235" width="1" height="11" fill="#a0a0a0"/>
<rect x="282" y="238" width="7" height="3" fill="#a0a0a0"/>
<rect x="283" y="239" width="5" height="1" fill="#b00000"/>
<rect x="294" y="240" width="1" height="14" fill="#a0a0a0"/>
<rect x="291" y="240" width="7" height="14" fill="#a0a0a0"/>
<rect x="292" y="241" width="5" height="12" fill="#b00000"/>
<rect x="303" y="245" width="1" height="9" fill="#a0a0a0"/>
<rect x="300" y="248" width="7" height="6" fill="#a0a0a0"/>
<rect x="301" y="249" width="5" height="4" fill="#0000b4"/>
<rect x="312" y="245" width="1" height="9" fill="#a0a0a0"/>
<rect x="309" y="248" width="7" height="1" fill="#a0a0a0"/>
<rect x="321" y="248" width="1" height="12" fill="#a0a0a0"/>
<rect x="318" y="248" width="7" height="6" fill="#a0a0a0"/>
<rect x="319" y="249" width="5" height="4" fill="#b00000"/>
<rect x="330" y="251" width="1" height="7" fill="#a0a0a0"/>
<rect x="327" y="253" width="7" height="1" fill="#a0a0a0"/>
<rect x="339" y="246" width="1" height="8" fill="#a0a0a0"/>
<rect x="336" y="248" width="7" height="6" fill="#a0a0a0"/>
<rect x="337" y="249" width="5" height="4" fill="#0000b4"/>
<rect x="348" y="240" width="1" height="14" fill="#a0a0a0"/>
<rect x="345" y="240" width="7" height="10" fill="#a0a0a0"/>
<rect x="346" y="241" width="5" height="8" fill="#0000b4"/>
<rect x="357" y="216" width="1" height="26" fill="#a0a0a0"/>
<rect x="354" y="219" width="7" height="23" fill="#a0a0a0"/>
<rect x="355" y="220" width="5" height="21" fill="#0000b4"/>
<rect x="366" y="198" width="1" height="26" fill="#a0a0a0"/>
<rect x="363" y="200" width="7" height="20" fill="#a0a0a0"/>
<rect x="364" y="201" width="5" height="18" fill="#0000b4"/>
<rect x="375" y="200" width="1" height="15" fill="#a0a0a0"/>
<rect x="372" y="199" width="7" height="1" fill="#a0a0a0"/>
<rect x="384" y="166" width="1" height="44" fill="#a0a0a0"/>
<rect x="381" y="174" width="7" height="27" fill="#a0a0a0"/>
<rect x="382" y="175" width="5" height="25" fill="#0000b4"/>
<rect x="393" y="165" width="1" height="26" fill="#a0a0a0"/>
<rect x="390" y="175" width="7" height="3" fill="#a0a0a0"/>
<rect x="391" y="176" width="5" height="1" fill="#b00000"/>
<rect x="402" y="168" width="1" height="27" fill="#a0a0a0"/>
<rect x="399" y="176" width="7" height="19" fill="#a0a0a0"/>
<rect x="400" y="177" width="5" height="17" fill="#b00000"/>
<rect x="411" y="180" width="1" height="27" fill="#a0a0a0"/>
<rect x="408" y="182" width="7" height="13" fill="#a0a0a0"/>
<rect x="409" y="183" width="5" height="11" fill="#0000b4"/>
<rect x="420" y="150" width="1" height="34" fill="#a0a0a0"/>
<rect x="417" y="165" width="7" height="18" fill="#a0a0a0"/>
<rect x="418" y="166" width="5" height="16" fill="#0000b4"/>
<rect x="429" y="126" width="1" height="44" fill="#a0a0a0"/>
<rect x="426" y="140" width="7" height="25" fill="#a0a0a0"/>
<rect x="427" y="141" width="5" height="23" fill="#0000b4"/>
<rect x="438" y="113" width="1" height="33" fill="#a0a0a0"/>
<rect x="435" y="119" width="7" height="22" fill="#a0a0a0"/>
<rect x="436" y="120" width="5" height="20" fill="#0000b4"/>
<rect x="447" y="116" width="1" height="22" fill="#a0a0a0"/>
<rect x="444" y="119" width="7" height="19" fill="#a0a0a0"/>
<rect x="445" y="120" width="5" height="17" fill="#b00000"/>
<rect x="456" y="121" width="1" height="20" fill="#a0a0a0"/>
<rect x="453" y="137" width="7" height="1" fill="#a0a0a0"/>
<rect x="465" y="132" width="1" height="27" fill="#a0a0a0"/>
<rect x="462" y="137" width="7" height="17" fill="#a0a0a0"/>
<rect x="463" y="138" width="5" height="15" fill="#b00000"/>
<rect x="474" y="148" width="1" height="25" fill="#a0a0a0"/>
<rect x="471" y="153" width="7" height="6" fill="#a0a0a0"/>
<rect x="472" y="154" width="5" height="4" fill="#b00000"/>
<rect x="483" y="159" width="1" height="37" fill="#a0a0a0"/>
<rect x="480" y="159" width="7" height="27" fill="#a0a0a0"/>
<rect x="481" y="160" width="5" height="25" fill="#b00000"/>
<rect x="492" y="177" width="1" height="46" fill="#a0a0a0"/>
<rect x="489" y="185" width="7" height="33" fill="#a0a0a0"/>
<rect x="490" y="186" width="5" height="31" fill="#b00000"/>
<rect x="501" y="198" width="1" height="38" fill="#a0a0a0"/>
<rect x="498" y="203" width="7" height="15" fill="#a0a0a0"/>
<rect x="499" y="204" width="5" height="13" fill="#0000b4"/>
<rect x="510" y="195" width="1" height="34" fill="#a0a0a0"/>
<rect x="507" y="203" width="7" height="15" fill="#a0a0a0"/>
<rect x="508" y="204" width="5" height="13" fill="#b00000"/>
<rect x="519" y="217" width="1" height="31" fill="#a0a0a0"/>
<rect x="516" y="217" width="7" height="9" fill="#a0a0a0"/>
<rect x="517" y="218" width="5" height="7" fill="#b00000"/>
<rect x="528" y="177" width="1" height="52" fill="#a0a0a0"/>
<rect x="525" y="195" width="7" height="31" fill="#a0a0a0"/>
<rect x="526" y="196" width="5" height="29" fill="#0000b4"/>
<rect x="537" y="186" width="1" height="27" fill="#a0a0a0"/>
<rect x="534" y="196" width="7" height="5" fill="#a0a0a0"/>
<rect x="535" y="197" width="5" height="3" fill="#b00000"/>
<rect x="546" y="154" width="1" height="47" fill="#a0a0a0"/>
<rect x="543" y="154" width="7" height="47" fill="#a0a0a0"/>
<rect x="544" y="155" width="5" height="45" fill="#0000b4"/>
<rect x="555" y="140" width="1" height="23" fill="#a0a0a0"/>
<rect x="552" y="155" width="7" height="3" fill="#a0a0a0"/>
<rect x="553" y="156" width="5" height="1" fill="#b00000"/>
<rect x="564" y="156" width="1" height="33" fill="#a0a0a0"/>
<rect x="561" y="156" width="7" height="22" fill="#a0a0a0"/>
<rect x="562" y="157" width="5" height="20" fill="#b00000"/>
<rect x="573" y="142" width="1" height="36" fill="#a0a0a0"/>
<rect x="570" y="167" width="7" height="11" fill="#a0a0a0"/>
<rect x="571" y="168" width="5" height="9" fill="#0000b4"/>
<rect x="582" y="164" width="1" height="21" fill="#a0a0a0"/>
<rect x="579" y="167" width="7" height="11" fill="#a0a0a0"/>
<rect x="580" y="168" width="5" height="9" fill="#b00000"/>
<rect x="591" y="171" width="1" height="29" fill="#a0a0a0"/>
<rect x="588" y="171" width="7" height="7" fill="#a0a0a0"/>
<rect x="589" y="172" width="5" height="5" fill="#0000b4"/>
<rect x="600" y="142" width="1" height="30" fill="#a0a0a0"/>
<rect x="597" y="153" width="7" height="19" fill="#a0a0a0"/>
<rect x="598" y="154" width="5" height="17" fill="#0000b4"/>
<rect x="609" y="111" width="1" height="46" fill="#a0a0a0"/>
<rect x="606" y="119" width="7" height="36" fill="#a0a0a0"/>
<rect x="607" y="120" width="5" height="34" fill="#0000b4"/>
<rect x="618" y="114" width="1" height="22" fill="#a0a0a0"/>
<rect x="615" y="119" width="7" height="12" fill="#a0a0a0"/>
<rect x="616" y="120" width="5" height="10" fill="#b00000"/>
<rect x="627" y="122" width="1" height="14" fill="#a0a0a0"/>
<rect x="624" y="127" width="7" height="4" fill="#a0a0a0"/>
<rect x="625" y="128" width="5" height="2" fill="#0000b4"/>
<rect x="636" y="124" width="1" height="12" fill="#a0a0a0"/>
<rect x="633" y="127" width="7" height="6" fill="#a0a0a0"/>
<rect x="634" y="128" width="5" height="4" fill="#b00000"/>
<rect x="645" y="117" width="1" height="22" fill="#a0a0a0"/>
<rect x="642" y="117" width="7" height="16" fill="#a0a0a0"/>
<rect x="643" y="118" width="5" height="14" fill="#0000b4"/>
<rect x="654" y="111" width="1" height="17" fill="#a0a0a0"/>
<rect x="651" y="117" width="7" height="8" fill="#a0a0a0"/>
<rect x="652" y="118" width="5" height="6" fill="#b00000"/>
<rect x="663" y="117" width="1" height="17" fill="#a0a0a0"/>
<rect x="660" y="124" width="7" height="4" fill="#a0a0a0"/>
<rect x="661" y="125" width="5" height="2" fill="#b00000"/>
<rect x="672" y="119" width="1" height="16" fill="#a0a0a0"/>
<rect x="669" y="127" width="7" height="8" fill="#a0a0a0"/>
<rect x="670" y="128" width="5" height="6" fill="#b00000"/>
<rect x="681" y="134" width="1" height="17" fill="#a0a0a0"/>
<rect x="678" y="134" width="7" height="14" fill="#a0a0a0"/>
<rect x="679" y="135" width="5" height="12" fill="#b00000"/>
<rect x="690" y="147" width="1" height="25" fill="#a0a0a0"/>
<rect x="687" y="147" width="7" height="22" fill="#a0a0a0"/>
<rect x="688" y="148" width="5" height="20" fill="#b00000"/>
<rect x="699" y="158" width="1" height="17" fill="#a0a0a0"/>
<rect x="696" y="169" width="7" height="3" fill="#a0a0a0"/>
<rect x="697" y="170" width="5" height="1" fill="#b00000"/>
<rect x="708" y="165" width="1" height="18" fill="#a0a0a0"/>
<rect x="705" y="168" width="7" height="4" fill="#a0a0a0"/>
<rect x="706" y="169" width="5" height="2" fill="#0000b4"/>
<rect x="717" y="147" width="1" height="22" fill="#a0a0a0"/>
<rect x="714" y="147" width="7" height="22" fill="#a0a0a0"/>
<rect x="715" y="148" width="5" height="20" fill="#0000b4"/>
<rect x="726" y="141" width="1" height="11" fill="#a0a0a0"/>
<rect x="723" y="147" width="7" height="1" fill="#a0a0a0"/>
<rect x="735" y="126" width="1" height="26" fill="#a0a0a0"/>
<rect x="732" y="129" width="7" height="19" fill="#a0a0a0"/>
<rect x="733" y="130" width="5" height="17" fill="#0000b4"/>
<rect x="744" y="129" width="1" height="17" fill="#a0a0a0"/>
<rect x="741" y="129" width="7" height="1" fill="#a0a0a0"/>
<rect x="753" y="123" width="1" height="21" fill="#a0a0a0"/>
<rect x="750" y="129" width="7" height="15" fill="#a0a0a0"/>
<rect x="751" y="130" width="5" height="13" fill="#b00000"/>
<rect x="762" y="123" width="1" height="25" fill="#a0a0a0"/>
<rect x="759" y="129" width="7" height="17" fill="#a0a0a0"/>
<rect x="760" y="130" width="5" height="15" fill="#0000b4"/>
<rect x="771" y="113" width="1" height="20" fill="#a0a0a0"/>
<rect x="768" y="123" width="7" height="7" fill="#a0a0a0"/>
<rect x="769" y="124" width="5" height="5" fill="#0000b4"/>
<rect x="780" y="115" width="1" height="15" fill="#a0a0a0"/>
<rect x="777" y="115" width="7" height="9" fill="#a0a0a0"/>
<rect x="778" y="116" width="5" height="7" fill="#0000b4"/>
<rect x="789" y="113" width="1" height="44" fill="#a0a0a0"/>
<rect x="786" y="115" width="7" height="42" fill="#a0a0a0"/>
<rect x="787" y="116" width="5" height="40" fill="#b00000"/>
<rect x="798" y="153" width="1" height="20" fill="#a0a0a0"/>
<rect x="795" y="156" width="7" height="17" fill="#a0a0a0"/>
<rect x="796" y="157" width="5" height="15" fill="#b00000"/>
<rect x="807" y="172" width="1" height="48" fill="#a0a0a0"/>
<rect x="804" y="172" width="7" height="48" fill="#a0a0a0"/>
<rect x="805" y="173" width="5" height="46" fill="#b00000"/>
<rect x="816" y="202" width="1" height="28" fill="#a0a0a0"/>
<rect x="813" y="215" width="7" height="5" fill="#a0a0a0"/>
<rect x="814" y="216" width="5" height="3" fill="#0000b4"/>
<rect x="825" y="203" width="1" height="26" fill="#a0a0a0"/>
<rect x="822" y="215" width="7" height="3" fill="#a0a0a0"/>
<rect x="823" y="216" width="5" height="1" fill="#b00000"/>
<rect x="834" y="180" width="1" height="37" fill="#a0a0a0"/>
<rect x="831" y="186" width="7" height="31" fill="#a0a0a0"/>
<rect x="832" y="187" width="5" height="29" fill="#0000b4"/>
<rect x="843" y="180" width="1" height="15" fill="#a0a0a0"/>
<rect x="840" y="180" width="7" height="7" fill="#a0a0a0"/>
<rect x="841" y="181" width="5" height="5" fill="#0000b4"/>
<rect x="852" y="162" width="1" height="19" fill="#a0a0a0"/>
<rect x="849" y="178" width="7" height="3" fill="#a0a0a0"/>
<rect x="850" y="179" width="5" height="1" fill="#0000b4"/>
<rect x="861" y="172" width="1" height="15" fill="#a0a0a0"/>
<rect x="858" y="178" width="7" height="3" fill="#a0a0a0"/>
<rect x="859" y="179" width="5" height="1" fill="#b00000"/>
<rect x="870" y="178" width="1" height="34" fill="#a0a0a0"/>
<rect x="867" y="180" width="7" height="26" fill="#a0a0a0"/>
<rect x="868" y="181" width="5" height="24" fill="#b00000"/>
<rect x="879" y="197" width="1" height="12" fill="#a0a0a0"/>
<rect x="876" y="205" width="7" height="1" fill="#a0a0a0"/>
<rect x="888" y="198" width="1" height="60" fill="#a0a0a0"/>
<rect x="885" y="205" width="7" height="53" fill="#a0a0a0"/>
<rect x="886" y="206" width="5" height="51" fill="#b00000"/>
<rect x="897" y="254" width="1" height="28" fill="#a0a0a0"/>
<rect x="894" y="257" width="7" height="9" fill="#a0a0a0"/>
<rect x="895" y="258" width="5" height="7" fill="#b00000"/>
<rect x="906" y="255" width="1" height="60" fill="#a0a0a0"/>
<rect x="903" y="265" width="7" height="39" fill="#a0a0a0"/>
<rect x="904" y="266" width="5" height="37" fill="#b00000"/>
<rect x="915" y="297" width="1" height="26" fill="#a0a0a0"/>
<rect x="912" y="302" width="7" height="1" fill="#a0a0a0"/>
<rect x="924" y="299" width="1" height="34" fill="#e8e8e8"/>
<rect x="921" y="302" width="7" height="25" fill="#e8e8e8"/>
<rect x="922" y="303" width="5" height="23" fill="#ff0000"/>
<rect x="28" y="112" width="928" height="1" fill="#ff0000"/>
<rect x="28" y="228" width="928" height="1" fill="#ff0000"/>
<rect x="28" y="346" width="928" height="1" fill="#ff0000"/>
<g clip-path="url(#cliptop)">
<polyline points="27.5,246.3 36.5,244.9 45.5,243.6 54.5,242.3 63.5,240.0 72.5,238.1 81.5,236.2 90.5,234.1 99.5,232.5 108.5,230.7 117.5,228.7 126.5,226.8 135.5,225.6 144.5,225.3 153.5,225.1 162.5,224.2 171.5,223.2 180.5,222.6 189.5,221.9 198.5,222.0 207.5,222.2 216.5,222.5 225.5,223.4 234.5,224.2 243.5,224.8 252.5,225.8 261.5,226.5 270.5,226.6 279.5,226.9 288.5,228.0 297.5,229.5 306.5,231.0 315.5,232.4 324.5,234.1 333.5,235.6 342.5,236.7 351.5,237.5 360.5,236.8 369.5,234.8 378.5,232.7 387.5,229.2 396.5,225.3 405.5,221.9 414.5,219.7 423.5,215.6 432.5,210.4 441.5,204.2 450.5,198.2 459.5,193.1 468.5,189.4 477.5,187.2 486.5,186.4 495.5,187.5 504.5,189.7 513.5,191.4 522.5,194.5 531.5,195.2 540.5,195.5 549.5,194.1 558.5,190.8 567.5,189.3 576.5,187.1 585.5,186.0 594.5,186.0 603.5,183.7 612.5,179.9 621.5,175.7 630.5,172.1 639.5,168.9 648.5,165.7 657.5,162.2 666.5,159.3 675.5,156.8 684.5,155.7 693.5,156.0 702.5,156.8 711.5,158.1 720.5,158.1 729.5,157.2 738.5,155.8 747.5,154.3 756.5,152.7 765.5,151.4 774.5,149.2 783.5,147.1 792.5,146.2 801.5,147.4 810.5,151.2 819.5,156.1 828.5,160.7 837.5,163.6 846.5,165.5 855.5,165.9 864.5,167.0 873.5,169.1 882.5,171.7 891.5,176.0 900.5,183.1 909.5,190.9 918.5,200.0 927.5,208.9" fill="none" stroke="#00ff00" stroke-width="1"/>
<polyline points="27.5,242.5 36.5,239.9 45.5,237.8 54.5,235.7 63.5,231.5 72.5,228.4 81.5,225.8 90.5,222.7 99.5,221.0 108.5,218.9 117.5,216.3 126.5,214.0 135.5,213.4 144.5,215.0 153.5,216.5 162.5,215.9 171.5,215.0 180.5,215.0 189.5,214.7 198.5,216.4 207.5,217.9 216.5,219.4 225.5,221.9 234.5,224.2 243.5,225.6 252.5,227.9 261.5,229.1 270.5,228.8 279.5,229.3 288.5,231.3 297.5,234.2 306.5,237.0 315.5,239.2 324.5,241.9 333.5,244.1 342.5,245.2 351.5,245.5 360.5,242.4 369.5,236.6 378.5,231.3 387.5,223.4 396.5,215.1 405.5,209.0 414.5,206.1 423.5,199.0 432.5,189.7 441.5,178.7 450.5,169.3 459.5,162.3 468.5,159.3 477.5,159.5 486.5,162.8 495.5,169.5 504.5,178.2 513.5,184.2 522.5,192.9 531.5,194.7 540.5,195.4 549.5,192.2 558.5,184.8 567.5,182.5 576.5,178.3 585.5,177.5 594.5,179.0 603.5,174.9 612.5,167.4 621.5,159.7 630.5,154.1 639.5,149.8 648.5,145.8 657.5,141.0 666.5,138.1 675.5,136.0 684.5,137.2 693.5,141.2 702.5,145.8 711.5,150.9 720.5,152.2 729.5,151.1 738.5,148.9 747.5,146.8 756.5,144.3 765.5,142.7 774.5,139.1 783.5,136.0 792.5,135.8 801.5,140.6 810.5,150.7 819.5,162.6 828.5,172.2 837.5,177.0 846.5,178.9 855.5,177.5 864.5,177.9 873.5,181.0 882.5,185.0 891.5,192.7 900.5,206.4 909.5,220.6 918.5,236.8 927.5,251.2" fill="none" stroke="#ffff00" stroke-width="1"/>
<polyline points="27.5,240.0 36.5,236.0 45.5,233.5 54.5,231.2 63.5,224.9 72.5,221.5 81.5,219.0 90.5,215.5 99.5,214.8 108.5,213.0 117.5,210.2 126.5,208.0 135.5,209.0 144.5,213.3 153.5,216.7 162.5,215.5 171.5,214.0 180.5,214.3 189.5,214.0 198.5,217.4 207.5,219.7 216.5,222.0 225.5,225.7 234.5,228.6 243.5,229.7 252.5,232.5 261.5,233.2 270.5,231.3 279.5,231.3 288.5,234.4 297.5,238.6 306.5,242.2 315.5,244.7 324.5,247.8 333.5,249.8 342.5,249.9 351.5,248.9 360.5,242.1 369.5,231.6 378.5,223.6 387.5,211.5 396.5,200.4 405.5,194.1 414.5,193.7 423.5,184.8 432.5,172.5 441.5,158.0 450.5,147.7 459.5,142.1 468.5,143.2 477.5,149.0 486.5,158.5 495.5,172.3 504.5,187.2 513.5,195.3 522.5,207.5 531.5,205.9 540.5,203.6 549.5,194.9 558.5,180.4 567.5,177.6 576.5,171.6 585.5,172.4 594.5,176.8 603.5,170.0 612.5,158.0 621.5,147.0 630.5,141.0 639.5,137.3 648.5,134.2 657.5,129.3 666.5,127.9 675.5,127.4 684.5,132.4 693.5,141.5 702.5,149.8 711.5,157.7 720.5,157.8 729.5,154.0 738.5,149.0 747.5,145.0 756.5,141.2 765.5,139.3 774.5,133.7 783.5,130.0 792.5,131.5 801.5,141.8 810.5,159.9 819.5,178.6 828.5,190.9 837.5,193.4 846.5,191.5 855.5,184.8 864.5,183.0 873.5,187.0 882.5,192.3 891.5,204.1 900.5,225.4 909.5,245.1 918.5,266.6 927.5,283.0" fill="none" stroke="#ff00ff" stroke-width="1"/>
</g>
<rect x="28" y="329" width="4" height="1" fill="#dfe6f4"/>
<rect x="35" y="329" width="5" height="1" fill="#dfe6f4"/>
<rect x="43" y="329" width="5" height="1" fill="#dfe6f4"/>
<rect x="51" y="329" width="5" height="1" fill="#dfe6f4"/>
<rect x="59" y="329" width="5" height="1" fill="#dfe6f4"/>
<rect x="67" y="329" width="5" height="1" fill="#dfe6f4"/>
<rect x="75" y="329" width="5" height="1" fill="#dfe6f4"/>
<rect x="83" y="329" width="5" height="1" fill="#dfe6f4"/>
<rect x="91" y="329" width="5" height="1" fill="#dfe6f4"/>
<rect x="99" y="329" width="5" height="1" fill="#dfe6f4"/>
<rect x="107" y="329" width="5" height="1" fill="#dfe6f4"/>
<rect x="115" y="329" width="5" height="1" fill="#dfe6f4"/>
<rect x="123" y="329" width="5" height="1" fill="#dfe6f4"/>
<rect x="131" y="329" width="5" height="1" fill="#dfe6f4"/>
<rect x="139" y="329" width="5" height="1" fill="#dfe6f4"/>
<rect x="147" y="329" width="5" height="1" fill="#dfe6f4"/>
<rect x="155" y="329" width="5" height="1" fill="#dfe6f4"/>
<rect x="163" y="329" width="5" height="1" fill="#dfe6f4"/>
<rect x="171" y="329" width="5" height="1" fill="#dfe6f4"/>
<rect x="179" y="329" width="5" height="1" fill="#dfe6f4"/>
<rect x="187" y="329" width="5" height="1" fill="#dfe6f4"/>
<rect x="195" y="329" width="5" height="1" fill="#dfe6f4"/>
<rect x="203" y="329" width="5" height="1" fill="#dfe6f4"/>
<rect x="211" y="329" width="5" height="1" fill="#dfe6f4"/>
<rect x="219" y="329" width="5" height="1" fill="#dfe6f4"/>
<rect x="227" y="329" width="5" height="1" fill="#dfe6f4"/>
<rect x="235" y="329" width="5" height="1" fill="#dfe6f4"/>
<rect x="243" y="329" width="5" height="1" fill="#dfe6f4"/>
<rect x="251" y="329" width="5" height="1" fill="#dfe6f4"/>
<rect x="259" y="329" width="5" height="1" fill="#dfe6f4"/>
<rect x="267" y="329" width="5" height="1" fill="#dfe6f4"/>
<rect x="275" y="329" width="5" height="1" fill="#dfe6f4"/>
<rect x="283" y="329" width="5" height="1" fill="#dfe6f4"/>
<rect x="291" y="329" width="5" height="1" fill="#dfe6f4"/>
<rect x="299" y="329" width="5" height="1" fill="#dfe6f4"/>
<rect x="307" y="329" width="5" height="1" fill="#dfe6f4"/>
<rect x="315" y="329" width="5" height="1" fill="#dfe6f4"/>
<rect x="323" y="329" width="5" height="1" fill="#dfe6f4"/>
<rect x="331" y="329" width="5" height="1" fill="#dfe6f4"/>
<rect x="339" y="329" width="5" height="1" fill="#dfe6f4"/>
<rect x="347" y="329" width="5" height="1" fill="#dfe6f4"/>
<rect x="355" y="329" width="5" height="1" fill="#dfe6f4"/>
<rect x="363" y="329" width="5" height="1" fill="#dfe6f4"/>
<rect x="371" y="329" width="5" height="1" fill="#dfe6f4"/>
<rect x="379" y="329" width="5" height="1" fill="#dfe6f4"/>
<rect x="387" y="329" width="5" height="1" fill="#dfe6f4"/>
<rect x="395" y="329" width="5" height="1" fill="#dfe6f4"/>
<rect x="403" y="329" width="5" height="1" fill="#dfe6f4"/>
<rect x="411" y="329" width="5" height="1" fill="#dfe6f4"/>
<rect x="419" y="329" width="5" height="1" fill="#dfe6f4"/>
<rect x="427" y="329" width="5" height="1" fill="#dfe6f4"/>
<rect x="435" y="329" width="5" height="1" fill="#dfe6f4"/>
<rect x="443" y="329" width="5" height="1" fill="#dfe6f4"/>
<rect x="451" y="329" width="5" height="1" fill="#dfe6f4"/>
<rect x="459" y="329" width="5" height="1" fill="#dfe6f4"/>
<rect x="467" y="329" width="5" height="1" fill="#dfe6f4"/>
<rect x="475" y="329" width="5" height="1" fill="#dfe6f4"/>
<rect x="483" y="329" width="5" height="1" fill="#dfe6f4"/>
<rect x="491" y="329" width="5" height="1" fill="#dfe6f4"/>
<rect x="499" y="329" width="5" height="1" fill="#dfe6f4"/>
<rect x="507" y="329" width="5" height="1" fill="#dfe6f4"/>
<rect x="515" y="329" width="5" height="1" fill="#dfe6f4"/>
<rect x="523" y="329" width="5" height="1" fill="#dfe6f4"/>
<rect x="531" y="329" width="5" height="1" fill="#dfe6f4"/>
<rect x="539" y="329" width="5" height="1" fill="#dfe6f4"/>
<rect x="547" y="329" width="5" height="1" fill="#dfe6f4"/>
<rect x="555" y="329" width="5" height="1" fill="#dfe6f4"/>
<rect x="563" y="329" width="5" height="1" fill="#dfe6f4"/>
<rect x="571" y="329" width="5" height="1" fill="#dfe6f4"/>
<rect x="579" y="329" width="5" height="1" fill="#dfe6f4"/>
<rect x="587" y="329" width="5" height="1" fill="#dfe6f4"/>
<rect x="595" y="329" width="5" height="1" fill="#dfe6f4"/>
<rect x="603" y="329" width="5" height="1" fill="#dfe6f4"/>
<rect x="611" y="329" width="5" height="1" fill="#dfe6f4"/>
<rect x="619" y="329" width="5" height="1" fill="#dfe6f4"/>
<rect x="627" y="329" width="5" height="1" fill="#dfe6f4"/>
<rect x="635" y="329" width="5" height="1" fill="#dfe6f4"/>
<rect x="643" y="329" width="5" height="1" fill="#dfe6f4"/>
<rect x="651" y="329" width="5" height="1" fill="#dfe6f4"/>
<rect x="659" y="329" width="5" height="1" fill="#dfe6f4"/>
<rect x="667" y="329" width="5" height="1" fill="#dfe6f4"/>
<rect x="675" y="329" width="5" height="1" fill="#dfe6f4"/>
<rect x="683" y="329" width="5" height="1" fill="#dfe6f4"/>
<rect x="691" y="329" width="5" height="1" fill="#dfe6f4"/>
<rect x="699" y="329" width="5" height="1" fill="#dfe6f4"/>
<rect x="707" y="329" width="5" height="1" fill="#dfe6f4"/>
<rect x="715" y="329" width="5" height="1" fill="#dfe6f4"/>
<rect x="723" y="329" width="5" height="1" fill="#dfe6f4"/>
<rect x="731" y="329" width="5" height="1" fill="#dfe6f4"/>
<rect x="739" y="329" width="5" height="1" fill="#dfe6f4"/>
<rect x="747" y="329" width="5" height="1" fill="#dfe6f4"/>
<rect x="755" y="329" width="5" height="1" fill="#dfe6f4"/>
<rect x="763" y="329" width="5" height="1" fill="#dfe6f4"/>
<rect x="771" y="329" width="5" height="1" fill="#dfe6f4"/>
<rect x="779" y="329" width="5" height="1" fill="#dfe6f4"/>
<rect x="787" y="329" width="5" height="1" fill="#dfe6f4"/>
<rect x="795" y="329" width="5" height="1" fill="#dfe6f4"/>
<rect x="803" y="329" width="5" height="1" fill="#dfe6f4"/>
<rect x="811" y="329" width="5" height="1" fill="#dfe6f4"/>
<rect x="819" y="329" width="5" height="1" fill="#dfe6f4"/>
<rect x="827" y="329" width="5" height="1" fill="#dfe6f4"/>
<rect x="835" y="329" width="5" height="1" fill="#dfe6f4"/>
<rect x="843" y="329" width="5" height="1" fill="#dfe6f4"/>
<rect x="851" y="329" width="5" height="1" fill="#dfe6f4"/>
<rect x="859" y="329" width="5" height="1" fill="#dfe6f4"/>
<rect x="867" y="329" width="5" height="1" fill="#dfe6f4"/>
<rect x="875" y="329" width="5" height="1" fill="#dfe6f4"/>
<rect x="883" y="329" width="5" height="1" fill="#dfe6f4"/>
<rect x="891" y="329" width="5" height="1" fill="#dfe6f4"/>
<rect x="899" y="329" width="5" height="1" fill="#dfe6f4"/>
<rect x="907" y="329" width="5" height="1" fill="#dfe6f4"/>
<rect x="915" y="329" width="5" height="1" fill="#dfe6f4"/>
<rect x="923" y="329" width="5" height="1" fill="#dfe6f4"/>
<rect x="931" y="329" width="5" height="1" fill="#dfe6f4"/>
<rect x="939" y="329" width="5" height="1" fill="#dfe6f4"/>
<rect x="947" y="329" width="5" height="1" fill="#dfe6f4"/>
<rect x="28" y="482" width="928" height="1" fill="#8e9299"/>
<rect x="28" y="519" width="928" height="1" fill="#8e9299"/>
<rect x="28" y="556" width="928" height="1" fill="#8e9299"/>
<polygon points="28.5,504.4 36.5,499.5 45.5,498.5 54.5,497.0 63.5,485.7 72.5,487.9 81.5,488.4 90.5,483.4 99.5,492.4 108.5,488.4 117.5,484.4 126.5,483.4 135.5,497.7 144.5,514.3 153.5,515.5 162.5,503.8 171.5,501.3 180.5,506.2 189.5,506.0 198.5,521.1 207.5,521.9 216.5,524.6 225.5,532.4 234.5,533.6 243.5,529.4 252.5,537.7 261.5,531.7 270.5,520.7 279.5,526.4 288.5,537.3 297.5,543.7 306.5,546.3 315.5,546.5 324.5,549.7 333.5,550.4 342.5,541.6 351.5,536.6 360.5,509.7 369.5,491.5 378.5,489.3 387.5,476.2 396.5,471.6 405.5,477.4 414.5,493.5 423.5,479.0 432.5,471.6 441.5,465.8 450.5,465.4 459.5,469.6 468.5,484.5 477.5,497.0 486.5,509.0 495.5,525.6 504.5,534.2 513.5,531.2 522.5,540.7 531.5,522.2 540.5,520.1 549.5,507.5 558.5,499.5 567.5,510.1 576.5,505.6 585.5,512.1 594.5,518.5 603.5,507.5 612.5,498.9 621.5,495.5 630.5,497.4 639.5,498.5 648.5,497.0 657.5,494.4 666.5,497.4 675.5,499.5 684.5,509.8 693.5,520.1 702.5,524.1 711.5,528.7 720.5,517.3 729.5,513.1 738.5,508.6 747.5,507.5 756.5,505.4 765.5,506.2 774.5,498.4 783.5,498.4 792.5,508.9 801.5,525.8 810.5,543.9 819.5,552.2 828.5,552.2 837.5,539.7 846.5,531.9 855.5,522.5 864.5,527.0 873.5,534.1 882.5,538.7 891.5,548.8 900.5,560.3 909.5,565.0 918.5,569.4 927.5,569.4 927.5,569.4 918.5,569.4 909.5,565.0 900.5,560.3 891.5,548.8 882.5,538.7 873.5,534.1 864.5,527.0 855.5,522.5 846.5,531.9 837.5,539.7 828.5,552.2 819.5,552.2 810.5,543.9 801.5,525.8 792.5,508.9 783.5,498.4 774.5,498.4 765.5,506.2 756.5,505.4 747.5,507.5 738.5,508.6 729.5,513.1 720.5,517.3 711.5,528.7 702.5,524.1 693.5,520.1 684.5,509.8 675.5,499.5 666.5,497.4 657.5,494.4 648.5,497.0 639.5,498.5 630.5,497.4 621.5,495.5 612.5,498.9 603.5,507.5 594.5,518.5 585.5,512.1 576.5,505.6 567.5,510.1 558.5,499.5 549.5,507.5 540.5,520.1 531.5,522.2 522.5,540.7 513.5,531.2 504.5,534.2 495.5,525.6 486.5,509.0 477.5,497.0 468.5,484.5 459.5,482.5 450.5,482.5 441.5,482.5 432.5,482.5 423.5,482.5 414.5,493.5 405.5,482.5 396.5,482.5 387.5,482.5 378.5,489.3 369.5,491.5 360.5,509.7 351.5,536.6 342.5,541.6 333.5,550.4 324.5,549.7 315.5,546.5 306.5,546.3 297.5,543.7 288.5,537.3 279.5,526.4 270.5,520.7 261.5,531.7 252.5,537.7 243.5,529.4 234.5,533.6 225.5,532.4 216.5,524.6 207.5,521.9 198.5,521.1 189.5,506.0 180.5,506.2 171.5,501.3 162.5,503.8 153.5,515.5 144.5,514.3 135.5,497.7 126.5,483.4 117.5,484.4 108.5,488.4 99.5,492.4 90.5,483.4 81.5,488.4 72.5,487.9 63.5,485.7 54.5,497.0 45.5,498.5 36.5,499.5 28.5,504.4" fill="#6d7486"/>
<polyline points="28.5,504.4 36.5,499.5 45.5,498.5 54.5,497.0 63.5,485.7 72.5,487.9 81.5,488.4 90.5,483.4 99.5,492.4 108.5,488.4 117.5,484.4 126.5,483.4 135.5,497.7 144.5,514.3 153.5,515.5 162.5,503.8 171.5,501.3 180.5,506.2 189.5,506.0 198.5,521.1 207.5,521.9 216.5,524.6 225.5,532.4 234.5,533.6 243.5,529.4 252.5,537.7 261.5,531.7 270.5,520.7 279.5,526.4 288.5,537.3 297.5,543.7 306.5,546.3 315.5,546.5 324.5,549.7 333.5,550.4 342.5,541.6 351.5,536.6 360.5,509.7 369.5,491.5 378.5,489.3 387.5,482.5 396.5,482.5 405.5,482.5 414.5,493.5 423.5,482.5 432.5,482.5 441.5,482.5 450.5,482.5 459.5,482.5 468.5,484.5 477.5,497.0 486.5,509.0 495.5,525.6 504.5,534.2 513.5,531.2 522.5,540.7 531.5,522.2 540.5,520.1 549.5,507.5 558.5,499.5 567.5,510.1 576.5,505.6 585.5,512.1 594.5,518.5 603.5,507.5 612.5,498.9 621.5,495.5 630.5,497.4 639.5,498.5 648.5,497.0 657.5,494.4 666.5,497.4 675.5,499.5 684.5,509.8 693.5,520.1 702.5,524.1 711.5,528.7 720.5,517.3 729.5,513.1 738.5,508.6 747.5,507.5 756.5,505.4 765.5,506.2 774.5,498.4 783.5,498.4 792.5,508.9 801.5,525.8 810.5,543.9 819.5,552.2 828.5,552.2 837.5,539.7 846.5,531.9 855.5,522.5 864.5,527.0 873.5,534.1 882.5,538.7 891.5,548.8 900.5,560.3 909.5,565.0 918.5,569.4 927.5,569.4" fill="none" stroke="#dde1ea" stroke-width="1"/>
<polygon points="28.5,504.4 36.5,499.5 45.5,498.5 54.5,497.0 63.5,485.7 72.5,487.9 81.5,488.4 90.5,483.4 99.5,492.4 108.5,488.4 117.5,484.4 126.5,483.4 135.5,497.7 144.5,514.3 153.5,515.5 162.5,503.8 171.5,501.3 180.5,506.2 189.5,506.0 198.5,521.1 207.5,521.9 216.5,524.6 225.5,532.4 234.5,533.6 243.5,529.4 252.5,537.7 261.5,531.7 270.5,520.7 279.5,526.4 288.5,537.3 297.5,543.7 306.5,546.3 315.5,546.5 324.5,549.7 333.5,550.4 342.5,541.6 351.5,536.6 360.5,509.7 369.5,491.5 378.5,489.3 387.5,476.2 396.5,471.6 405.5,477.4 414.5,493.5 423.5,479.0 432.5,471.6 441.5,465.8 450.5,465.4 459.5,469.6 468.5,484.5 477.5,497.0 486.5,509.0 495.5,525.6 504.5,534.2 513.5,531.2 522.5,540.7 531.5,522.2 540.5,520.1 549.5,507.5 558.5,499.5 567.5,510.1 576.5,505.6 585.5,512.1 594.5,518.5 603.5,507.5 612.5,498.9 621.5,495.5 630.5,497.4 639.5,498.5 648.5,497.0 657.5,494.4 666.5,497.4 675.5,499.5 684.5,509.8 693.5,520.1 702.5,524.1 711.5,528.7 720.5,517.3 729.5,513.1 738.5,508.6 747.5,507.5 756.5,505.4 765.5,506.2 774.5,498.4 783.5,498.4 792.5,508.9 801.5,525.8 810.5,543.9 819.5,552.2 828.5,552.2 837.5,539.7 846.5,531.9 855.5,522.5 864.5,527.0 873.5,534.1 882.5,538.7 891.5,548.8 900.5,560.3 909.5,565.0 918.5,569.4 927.5,569.4 927.5,556.5 918.5,556.5 909.5,556.5 900.5,556.5 891.5,548.8 882.5,538.7 873.5,534.1 864.5,527.0 855.5,522.5 846.5,531.9 837.5,539.7 828.5,552.2 819.5,552.2 810.5,543.9 801.5,525.8 792.5,508.9 783.5,498.4 774.5,498.4 765.5,506.2 756.5,505.4 747.5,507.5 738.5,508.6 729.5,513.1 720.5,517.3 711.5,528.7 702.5,524.1 693.5,520.1 684.5,509.8 675.5,499.5 666.5,497.4 657.5,494.4 648.5,497.0 639.5,498.5 630.5,497.4 621.5,495.5 612.5,498.9 603.5,507.5 594.5,518.5 585.5,512.1 576.5,505.6 567.5,510.1 558.5,499.5 549.5,507.5 540.5,520.1 531.5,522.2 522.5,540.7 513.5,531.2 504.5,534.2 495.5,525.6 486.5,509.0 477.5,497.0 468.5,484.5 459.5,469.6 450.5,465.4 441.5,465.8 432.5,471.6 423.5,479.0 414.5,493.5 405.5,477.4 396.5,471.6 387.5,476.2 378.5,489.3 369.5,491.5 360.5,509.7 351.5,536.6 342.5,541.6 333.5,550.4 324.5,549.7 315.5,546.5 306.5,546.3 297.5,543.7 288.5,537.3 279.5,526.4 270.5,520.7 261.5,531.7 252.5,537.7 243.5,529.4 234.5,533.6 225.5,532.4 216.5,524.6 207.5,521.9 198.5,521.1 189.5,506.0 180.5,506.2 171.5,501.3 162.5,503.8 153.5,515.5 144.5,514.3 135.5,497.7 126.5,483.4 117.5,484.4 108.5,488.4 99.5,492.4 90.5,483.4 81.5,488.4 72.5,487.9 63.5,485.7 54.5,497.0 45.5,498.5 36.5,499.5 28.5,504.4" fill="#6d7486"/>
<polyline points="28.5,504.4 36.5,499.5 45.5,498.5 54.5,497.0 63.5,485.7 72.5,487.9 81.5,488.4 90.5,483.4 99.5,492.4 108.5,488.4 117.5,484.4 126.5,483.4 135.5,497.7 144.5,514.3 153.5,515.5 162.5,503.8 171.5,501.3 180.5,506.2 189.5,506.0 198.5,521.1 207.5,521.9 216.5,524.6 225.5,532.4 234.5,533.6 243.5,529.4 252.5,537.7 261.5,531.7 270.5,520.7 279.5,526.4 288.5,537.3 297.5,543.7 306.5,546.3 315.5,546.5 324.5,549.7 333.5,550.4 342.5,541.6 351.5,536.6 360.5,509.7 369.5,491.5 378.5,489.3 387.5,476.2 396.5,471.6 405.5,477.4 414.5,493.5 423.5,479.0 432.5,471.6 441.5,465.8 450.5,465.4 459.5,469.6 468.5,484.5 477.5,497.0 486.5,509.0 495.5,525.6 504.5,534.2 513.5,531.2 522.5,540.7 531.5,522.2 540.5,520.1 549.5,507.5 558.5,499.5 567.5,510.1 576.5,505.6 585.5,512.1 594.5,518.5 603.5,507.5 612.5,498.9 621.5,495.5 630.5,497.4 639.5,498.5 648.5,497.0 657.5,494.4 666.5,497.4 675.5,499.5 684.5,509.8 693.5,520.1 702.5,524.1 711.5,528.7 720.5,517.3 729.5,513.1 738.5,508.6 747.5,507.5 756.5,505.4 765.5,506.2 774.5,498.4 783.5,498.4 792.5,508.9 801.5,525.8 810.5,543.9 819.5,552.2 828.5,552.2 837.5,539.7 846.5,531.9 855.5,522.5 864.5,527.0 873.5,534.1 882.5,538.7 891.5,548.8 900.5,556.5 909.5,556.5 918.5,556.5 927.5,556.5" fill="none" stroke="#dde1ea" stroke-width="1"/>
<polyline points="28.5,504.4 36.5,499.5 45.5,498.5 54.5,497.0 63.5,485.7 72.5,487.9 81.5,488.4 90.5,483.4 99.5,492.4 108.5,488.4 117.5,484.4 126.5,483.4 135.5,497.7 144.5,514.3 153.5,515.5 162.5,503.8 171.5,501.3 180.5,506.2 189.5,506.0 198.5,521.1 207.5,521.9 216.5,524.6 225.5,532.4 234.5,533.6 243.5,529.4 252.5,537.7 261.5,531.7 270.5,520.7 279.5,526.4 288.5,537.3 297.5,543.7 306.5,546.3 315.5,546.5 324.5,549.7 333.5,550.4 342.5,541.6 351.5,536.6 360.5,509.7 369.5,491.5 378.5,489.3 387.5,476.2 396.5,471.6 405.5,477.4 414.5,493.5 423.5,479.0 432.5,471.6 441.5,465.8 450.5,465.4 459.5,469.6 468.5,484.5 477.5,497.0 486.5,509.0 495.5,525.6 504.5,534.2 513.5,531.2 522.5,540.7 531.5,522.2 540.5,520.1 549.5,507.5 558.5,499.5 567.5,510.1 576.5,505.6 585.5,512.1 594.5,518.5 603.5,507.5 612.5,498.9 621.5,495.5 630.5,497.4 639.5,498.5 648.5,497.0 657.5,494.4 666.5,497.4 675.5,499.5 684.5,509.8 693.5,520.1 702.5,524.1 711.5,528.7 720.5,517.3 729.5,513.1 738.5,508.6 747.5,507.5 756.5,505.4 765.5,506.2 774.5,498.4 783.5,498.4 792.5,508.9 801.5,525.8 810.5,543.9 819.5,552.2 828.5,552.2 837.5,539.7 846.5,531.9 855.5,522.5 864.5,527.0 873.5,534.1 882.5,538.7 891.5,548.8 900.5,560.3 909.5,565.0 918.5,569.4 927.5,569.4" fill="none" stroke="#e4e8f0" stroke-width="1"/>
<rect x="28" y="570" width="4" height="1" fill="#dfe6f4"/>
<rect x="35" y="570" width="5" height="1" fill="#dfe6f4"/>
<rect x="43" y="570" width="5" height="1" fill="#dfe6f4"/>
<rect x="51" y="570" width="5" height="1" fill="#dfe6f4"/>
<rect x="59" y="570" width="5" height="1" fill="#dfe6f4"/>
<rect x="67" y="570" width="5" height="1" fill="#dfe6f4"/>
<rect x="75" y="570" width="5" height="1" fill="#dfe6f4"/>
<rect x="83" y="570" width="5" height="1" fill="#dfe6f4"/>
<rect x="91" y="570" width="5" height="1" fill="#dfe6f4"/>
<rect x="99" y="570" width="5" height="1" fill="#dfe6f4"/>
<rect x="107" y="570" width="5" height="1" fill="#dfe6f4"/>
<rect x="115" y="570" width="5" height="1" fill="#dfe6f4"/>
<rect x="123" y="570" width="5" height="1" fill="#dfe6f4"/>
<rect x="131" y="570" width="5" height="1" fill="#dfe6f4"/>
<rect x="139" y="570" width="5" height="1" fill="#dfe6f4"/>
<rect x="147" y="570" width="5" height="1" fill="#dfe6f4"/>
<rect x="155" y="570" width="5" height="1" fill="#dfe6f4"/>
<rect x="163" y="570" width="5" height="1" fill="#dfe6f4"/>
<rect x="171" y="570" width="5" height="1" fill="#dfe6f4"/>
<rect x="179" y="570" width="5" height="1" fill="#dfe6f4"/>
<rect x="187" y="570" width="5" height="1" fill="#dfe6f4"/>
<rect x="195" y="570" width="5" height="1" fill="#dfe6f4"/>
<rect x="203" y="570" width="5" height="1" fill="#dfe6f4"/>
<rect x="211" y="570" width="5" height="1" fill="#dfe6f4"/>
<rect x="219" y="570" width="5" height="1" fill="#dfe6f4"/>
<rect x="227" y="570" width="5" height="1" fill="#dfe6f4"/>
<rect x="235" y="570" width="5" height="1" fill="#dfe6f4"/>
<rect x="243" y="570" width="5" height="1" fill="#dfe6f4"/>
<rect x="251" y="570" width="5" height="1" fill="#dfe6f4"/>
<rect x="259" y="570" width="5" height="1" fill="#dfe6f4"/>
<rect x="267" y="570" width="5" height="1" fill="#dfe6f4"/>
<rect x="275" y="570" width="5" height="1" fill="#dfe6f4"/>
<rect x="283" y="570" width="5" height="1" fill="#dfe6f4"/>
<rect x="291" y="570" width="5" height="1" fill="#dfe6f4"/>
<rect x="299" y="570" width="5" height="1" fill="#dfe6f4"/>
<rect x="307" y="570" width="5" height="1" fill="#dfe6f4"/>
<rect x="315" y="570" width="5" height="1" fill="#dfe6f4"/>
<rect x="323" y="570" width="5" height="1" fill="#dfe6f4"/>
<rect x="331" y="570" width="5" height="1" fill="#dfe6f4"/>
<rect x="339" y="570" width="5" height="1" fill="#dfe6f4"/>
<rect x="347" y="570" width="5" height="1" fill="#dfe6f4"/>
<rect x="355" y="570" width="5" height="1" fill="#dfe6f4"/>
<rect x="363" y="570" width="5" height="1" fill="#dfe6f4"/>
<rect x="371" y="570" width="5" height="1" fill="#dfe6f4"/>
<rect x="379" y="570" width="5" height="1" fill="#dfe6f4"/>
<rect x="387" y="570" width="5" height="1" fill="#dfe6f4"/>
<rect x="395" y="570" width="5" height="1" fill="#dfe6f4"/>
<rect x="403" y="570" width="5" height="1" fill="#dfe6f4"/>
<rect x="411" y="570" width="5" height="1" fill="#dfe6f4"/>
<rect x="419" y="570" width="5" height="1" fill="#dfe6f4"/>
<rect x="427" y="570" width="5" height="1" fill="#dfe6f4"/>
<rect x="435" y="570" width="5" height="1" fill="#dfe6f4"/>
<rect x="443" y="570" width="5" height="1" fill="#dfe6f4"/>
<rect x="451" y="570" width="5" height="1" fill="#dfe6f4"/>
<rect x="459" y="570" width="5" height="1" fill="#dfe6f4"/>
<rect x="467" y="570" width="5" height="1" fill="#dfe6f4"/>
<rect x="475" y="570" width="5" height="1" fill="#dfe6f4"/>
<rect x="483" y="570" width="5" height="1" fill="#dfe6f4"/>
<rect x="491" y="570" width="5" height="1" fill="#dfe6f4"/>
<rect x="499" y="570" width="5" height="1" fill="#dfe6f4"/>
<rect x="507" y="570" width="5" height="1" fill="#dfe6f4"/>
<rect x="515" y="570" width="5" height="1" fill="#dfe6f4"/>
<rect x="523" y="570" width="5" height="1" fill="#dfe6f4"/>
<rect x="531" y="570" width="5" height="1" fill="#dfe6f4"/>
<rect x="539" y="570" width="5" height="1" fill="#dfe6f4"/>
<rect x="547" y="570" width="5" height="1" fill="#dfe6f4"/>
<rect x="555" y="570" width="5" height="1" fill="#dfe6f4"/>
<rect x="563" y="570" width="5" height="1" fill="#dfe6f4"/>
<rect x="571" y="570" width="5" height="1" fill="#dfe6f4"/>
<rect x="579" y="570" width="5" height="1" fill="#dfe6f4"/>
<rect x="587" y="570" width="5" height="1" fill="#dfe6f4"/>
<rect x="595" y="570" width="5" height="1" fill="#dfe6f4"/>
<rect x="603" y="570" width="5" height="1" fill="#dfe6f4"/>
<rect x="611" y="570" width="5" height="1" fill="#dfe6f4"/>
<rect x="619" y="570" width="5" height="1" fill="#dfe6f4"/>
<rect x="627" y="570" width="5" height="1" fill="#dfe6f4"/>
<rect x="635" y="570" width="5" height="1" fill="#dfe6f4"/>
<rect x="643" y="570" width="5" height="1" fill="#dfe6f4"/>
<rect x="651" y="570" width="5" height="1" fill="#dfe6f4"/>
<rect x="659" y="570" width="5" height="1" fill="#dfe6f4"/>
<rect x="667" y="570" width="5" height="1" fill="#dfe6f4"/>
<rect x="675" y="570" width="5" height="1" fill="#dfe6f4"/>
<rect x="683" y="570" width="5" height="1" fill="#dfe6f4"/>
<rect x="691" y="570" width="5" height="1" fill="#dfe6f4"/>
<rect x="699" y="570" width="5" height="1" fill="#dfe6f4"/>
<rect x="707" y="570" width="5" height="1" fill="#dfe6f4"/>
<rect x="715" y="570" width="5" height="1" fill="#dfe6f4"/>
<rect x="723" y="570" width="5" height="1" fill="#dfe6f4"/>
<rect x="731" y="570" width="5" height="1" fill="#dfe6f4"/>
<rect x="739" y="570" width="5" height="1" fill="#dfe6f4"/>
<rect x="747" y="570" width="5" height="1" fill="#dfe6f4"/>
<rect x="755" y="570" width="5" height="1" fill="#dfe6f4"/>
<rect x="763" y="570" width="5" height="1" fill="#dfe6f4"/>
<rect x="771" y="570" width="5" height="1" fill="#dfe6f4"/>
<rect x="779" y="570" width="5" height="1" fill="#dfe6f4"/>
<rect x="787" y="570" width="5" height="1" fill="#dfe6f4"/>
<rect x="795" y="570" width="5" height="1" fill="#dfe6f4"/>
<rect x="803" y="570" width="5" height="1" fill="#dfe6f4"/>
<rect x="811" y="570" width="5" height="1" fill="#dfe6f4"/>
<rect x="819" y="570" width="5" height="1" fill="#dfe6f4"/>
<rect x="827" y="570" width="5" height="1" fill="#dfe6f4"/>
<rect x="835" y="570" width="5" height="1" fill="#dfe6f4"/>
<rect x="843" y="570" width="5" height="1" fill="#dfe6f4"/>
<rect x="851" y="570" width="5" height="1" fill="#dfe6f4"/>
<rect x="859" y="570" width="5" height="1" fill="#dfe6f4"/>
<rect x="867" y="570" width="5" height="1" fill="#dfe6f4"/>
<rect x="875" y="570" width="5" height="1" fill="#dfe6f4"/>
<rect x="883" y="570" width="5" height="1" fill="#dfe6f4"/>
<rect x="891" y="570" width="5" height="1" fill="#dfe6f4"/>
<rect x="899" y="570" width="5" height="1" fill="#dfe6f4"/>
<rect x="907" y="570" width="5" height="1" fill="#dfe6f4"/>
<rect x="915" y="570" width="5" height="1" fill="#dfe6f4"/>
<rect x="923" y="570" width="5" height="1" fill="#dfe6f4"/>
<rect x="931" y="570" width="5" height="1" fill="#dfe6f4"/>
<rect x="939" y="570" width="5" height="1" fill="#dfe6f4"/>
<rect x="947" y="570" width="5" height="1" fill="#dfe6f4"/>
<!-- separator -->
<rect x="27" y="406" width="979" height="1" fill="#8a92a2"/>
</svg>

<div class="ax" style="top:82px">1.21200</div>
<div class="ax" style="top:134px">1.21000</div>
<div class="ax" style="top:187px">1.20800</div>
<div class="ax" style="top:240px">1.20600</div>
<div class="ax" style="top:292px">1.20400</div>
<div class="ax" style="top:345px">1.20200</div>
<div class="a" style="left:957px;top:95px;width:48px;height:15px;background:#7a8292"></div>
<div class="a" style="left:957px;top:96px;width:48px;height:13px;background:#9ca6bb"></div>
<div class="ax" style="top:96px">1.21140</div>
<div class="a" style="left:957px;top:322px;width:48px;height:15px;background:#7a8292"></div>
<div class="a" style="left:957px;top:323px;width:48px;height:13px;background:#d8dce3"></div>
<div class="ax" style="top:323px">1.20285</div>
<div class="a" style="left:957px;top:396px;width:48px;height:10px;overflow:hidden"><div class="ax" style="left:0;top:2px">1.20000</div></div>
<div class="ax" style="top:405px">110.00</div>
<div class="ax" style="top:422px">100.00</div>
<div class="ax" style="top:441px">90.00</div>
<div class="ax" style="top:459px">80.00</div>
<div class="ax" style="top:477px">70.00</div>
<div class="ax" style="top:496px">60.00</div>
<div class="ax" style="top:514px">50.00</div>
<div class="ax" style="top:532px">40.00</div>
<div class="ax" style="top:551px">30.00</div>
<div class="ax" style="top:587px">10.00</div>
<div class="ax" style="top:606px">0.00</div>
<div class="ax" style="top:624px">-10.00</div>
<div class="a" style="left:957px;top:563px;width:48px;height:15px;background:#7a8292"></div>
<div class="a" style="left:957px;top:564px;width:48px;height:13px;background:#d8dce3"></div>
<div class="ax" style="top:565px">21.91</div>

<!-- legend -->
<div class="t" style="left:30px;top:39px;-webkit-text-stroke:0;color:#e8e8ee">EUR/USD (Candlestick)</div>
<div class="t" style="left:30px;top:50px;-webkit-text-stroke:0;color:#ff00ff">EMA (5)</div>
<div class="t" style="left:30px;top:61px;-webkit-text-stroke:0;color:#ffff00">EMA (10)</div>
<div class="t" style="left:30px;top:72px;-webkit-text-stroke:0;color:#00ff00">EMA (25)</div>
<div class="t" style="left:30px;top:406px;-webkit-text-stroke:0;color:#6f9ae8">RSI (14)</div>

<!-- info box -->
<div class="a" style="left:29px;top:376px;width:234px;height:29px;background:#7a8292"></div>
<div class="a" style="left:29px;top:376px;width:233px;height:14px;background:#d8dce3"></div>
<div class="a" style="left:29px;top:391px;width:233px;height:13px;background:#c3c8d1"></div>
<div class="t" style="left:33px;top:377px">22:30</div>
<div class="t" style="left:33px;top:391px">O=1.20640, C=1.20660, H=1.20660, L=1.20630</div>

<div class="a" style="left:28px;top:604px;width:36px;height:30px;background:#1a2030"></div>
<div class="a" style="left:29px;top:604px;width:34px;height:14px;background:#d8dce3"></div>
<div class="a" style="left:29px;top:619px;width:34px;height:13px;background:#c3c8d1"></div>
<div class="t" style="left:32px;top:605px">22:30</div>
<div class="t" style="left:32px;top:619px">42.09</div>

<!-- cursor -->
<svg class="a" style="left:165px;top:92px" width="12" height="19" shape-rendering="crispEdges"><rect x="0" y="0" width="1" height="1" fill="#000"/><rect x="0" y="1" width="1" height="1" fill="#000"/><rect x="1" y="1" width="1" height="1" fill="#000"/><rect x="0" y="2" width="1" height="1" fill="#000"/><rect x="1" y="2" width="1" height="1" fill="#fff"/><rect x="2" y="2" width="1" height="1" fill="#000"/><rect x="0" y="3" width="1" height="1" fill="#000"/><rect x="1" y="3" width="1" height="1" fill="#fff"/><rect x="2" y="3" width="1" height="1" fill="#fff"/><rect x="3" y="3" width="1" height="1" fill="#000"/><rect x="0" y="4" width="1" height="1" fill="#000"/><rect x="1" y="4" width="1" height="1" fill="#fff"/><rect x="2" y="4" width="1" height="1" fill="#fff"/><rect x="3" y="4" width="1" height="1" fill="#fff"/><rect x="4" y="4" width="1" height="1" fill="#000"/><rect x="0" y="5" width="1" height="1" fill="#000"/><rect x="1" y="5" width="1" height="1" fill="#fff"/><rect x="2" y="5" width="1" height="1" fill="#fff"/><rect x="3" y="5" width="1" height="1" fill="#fff"/><rect x="4" y="5" width="1" height="1" fill="#fff"/><rect x="5" y="5" width="1" height="1" fill="#000"/><rect x="0" y="6" width="1" height="1" fill="#000"/><rect x="1" y="6" width="1" height="1" fill="#fff"/><rect x="2" y="6" width="1" height="1" fill="#fff"/><rect x="3" y="6" width="1" height="1" fill="#fff"/><rect x="4" y="6" width="1" height="1" fill="#fff"/><rect x="5" y="6" width="1" height="1" fill="#fff"/><rect x="6" y="6" width="1" height="1" fill="#000"/><rect x="0" y="7" width="1" height="1" fill="#000"/><rect x="1" y="7" width="1" height="1" fill="#fff"/><rect x="2" y="7" width="1" height="1" fill="#fff"/><rect x="3" y="7" width="1" height="1" fill="#fff"/><rect x="4" y="7" width="1" height="1" fill="#fff"/><rect x="5" y="7" width="1" height="1" fill="#fff"/><rect x="6" y="7" width="1" height="1" fill="#fff"/><rect x="7" y="7" width="1" height="1" fill="#000"/><rect x="0" y="8" width="1" height="1" fill="#000"/><rect x="1" y="8" width="1" height="1" fill="#fff"/><rect x="2" y="8" width="1" height="1" fill="#fff"/><rect x="3" y="8" width="1" height="1" fill="#fff"/><rect x="4" y="8" width="1" height="1" fill="#fff"/><rect x="5" y="8" width="1" height="1" fill="#fff"/><rect x="6" y="8" width="1" height="1" fill="#fff"/><rect x="7" y="8" width="1" height="1" fill="#fff"/><rect x="8" y="8" width="1" height="1" fill="#000"/><rect x="0" y="9" width="1" height="1" fill="#000"/><rect x="1" y="9" width="1" height="1" fill="#fff"/><rect x="2" y="9" width="1" height="1" fill="#fff"/><rect x="3" y="9" width="1" height="1" fill="#fff"/><rect x="4" y="9" width="1" height="1" fill="#fff"/><rect x="5" y="9" width="1" height="1" fill="#fff"/><rect x="6" y="9" width="1" height="1" fill="#fff"/><rect x="7" y="9" width="1" height="1" fill="#fff"/><rect x="8" y="9" width="1" height="1" fill="#fff"/><rect x="9" y="9" width="1" height="1" fill="#000"/><rect x="0" y="10" width="1" height="1" fill="#000"/><rect x="1" y="10" width="1" height="1" fill="#fff"/><rect x="2" y="10" width="1" height="1" fill="#fff"/><rect x="3" y="10" width="1" height="1" fill="#fff"/><rect x="4" y="10" width="1" height="1" fill="#fff"/><rect x="5" y="10" width="1" height="1" fill="#fff"/><rect x="6" y="10" width="1" height="1" fill="#000"/><rect x="7" y="10" width="1" height="1" fill="#000"/><rect x="8" y="10" width="1" height="1" fill="#000"/><rect x="9" y="10" width="1" height="1" fill="#000"/><rect x="10" y="10" width="1" height="1" fill="#000"/><rect x="0" y="11" width="1" height="1" fill="#000"/><rect x="1" y="11" width="1" height="1" fill="#fff"/><rect x="2" y="11" width="1" height="1" fill="#fff"/><rect x="3" y="11" width="1" height="1" fill="#000"/><rect x="4" y="11" width="1" height="1" fill="#fff"/><rect x="5" y="11" width="1" height="1" fill="#fff"/><rect x="6" y="11" width="1" height="1" fill="#000"/><rect x="0" y="12" width="1" height="1" fill="#000"/><rect x="1" y="12" width="1" height="1" fill="#fff"/><rect x="2" y="12" width="1" height="1" fill="#000"/><rect x="4" y="12" width="1" height="1" fill="#000"/><rect x="5" y="12" width="1" height="1" fill="#fff"/><rect x="6" y="12" width="1" height="1" fill="#fff"/><rect x="7" y="12" width="1" height="1" fill="#000"/><rect x="0" y="13" width="1" height="1" fill="#000"/><rect x="1" y="13" width="1" height="1" fill="#000"/><rect x="4" y="13" width="1" height="1" fill="#000"/><rect x="5" y="13" width="1" height="1" fill="#fff"/><rect x="6" y="13" width="1" height="1" fill="#fff"/><rect x="7" y="13" width="1" height="1" fill="#000"/><rect x="0" y="14" width="1" height="1" fill="#000"/><rect x="5" y="14" width="1" height="1" fill="#000"/><rect x="6" y="14" width="1" height="1" fill="#fff"/><rect x="7" y="14" width="1" height="1" fill="#fff"/><rect x="8" y="14" width="1" height="1" fill="#000"/><rect x="5" y="15" width="1" height="1" fill="#000"/><rect x="6" y="15" width="1" height="1" fill="#fff"/><rect x="7" y="15" width="1" height="1" fill="#fff"/><rect x="8" y="15" width="1" height="1" fill="#000"/><rect x="6" y="16" width="1" height="1" fill="#000"/><rect x="7" y="16" width="1" height="1" fill="#fff"/><rect x="8" y="16" width="1" height="1" fill="#fff"/><rect x="9" y="16" width="1" height="1" fill="#000"/><rect x="6" y="17" width="1" height="1" fill="#000"/><rect x="7" y="17" width="1" height="1" fill="#fff"/><rect x="8" y="17" width="1" height="1" fill="#fff"/><rect x="9" y="17" width="1" height="1" fill="#000"/><rect x="7" y="18" width="1" height="1" fill="#000"/><rect x="8" y="18" width="1" height="1" fill="#000"/></svg>

<!-- toolbar content -->
<div class="t" style="left:36px;top:643px;font-size:10px;letter-spacing:0.3px">Currency</div>
<div class="a" style="left:85px;top:641px;width:103px;height:17px;background:#6e7686"></div>
<div class="a" style="left:86px;top:642px;width:85px;height:15px;background:#fff"></div>
<div class="a" style="left:172px;top:642px;width:15px;height:15px;background:#d4d8df"></div>
<div class="t" style="left:90px;top:643px">EUR/USD</div>
<div class="t" style="left:200px;top:643px;letter-spacing:0.3px">Interval</div>
<div class="a" style="left:249px;top:641px;width:103px;height:17px;background:#6e7686"></div>
<div class="a" style="left:250px;top:642px;width:85px;height:15px;background:#fff"></div>
<div class="a" style="left:336px;top:642px;width:15px;height:15px;background:#d4d8df"></div>
<div class="t" style="left:254px;top:643px">30 min</div>
<div class="a" style="left:359px;top:641px;width:47px;height:17px;background:#6e7686"></div>
<div class="a" style="left:360px;top:642px;width:45px;height:15px;background:#d4d8df"></div>
<div class="t" style="left:364px;top:643px">More</div>

<svg class="a" style="left:0;top:0" width="1006" height="40">
<g fill="#000" shape-rendering="crispEdges">
<rect x="908" y="8" width="1" height="4"/><polygon points="906,10 911,10 908.5,13"/>
<rect x="908" y="15" width="1" height="4"/><polygon points="906,17 911,17 908.5,14"/>
<rect x="922" y="10" width="1" height="8"/><polygon points="920,12 925,12 922.5,9"/><polygon points="920,16 925,16 922.5,19"/>
</g>
<g fill="none" stroke="#000" stroke-width="1.2">
<circle cx="945.5" cy="11.5" r="3.2"/><line x1="945.5" y1="8.5" x2="945.5" y2="14.5"/><line x1="942.5" y1="11.5" x2="948.5" y2="11.5"/>
<line x1="947.5" y1="14" x2="949.5" y2="18" stroke-width="1.8"/>
<circle cx="959.5" cy="11.5" r="3.2"/><line x1="957.5" y1="11.5" x2="961.5" y2="11.5"/>
<line x1="961.5" y1="14" x2="963.5" y2="18" stroke-width="1.8"/>
</g>
<polygon points="986,9.5 986,17 981.5,13.2" fill="#000"/>
<polygon points="997,9.5 997,17 1001.5,13.2" fill="#a4acbc"/>
<line x1="976" y1="36" x2="983" y2="29" stroke="#c01010" stroke-width="2"/>
</svg>
<svg class="a" style="left:0;top:630px" width="420" height="33">
<polygon points="175,17 183,17 179,22" fill="#000"/>
<polygon points="339,17 347,17 343,22" fill="#000"/>
<polygon points="393,21 401,21 397,16" fill="#000"/>
</svg>
</body></html>
